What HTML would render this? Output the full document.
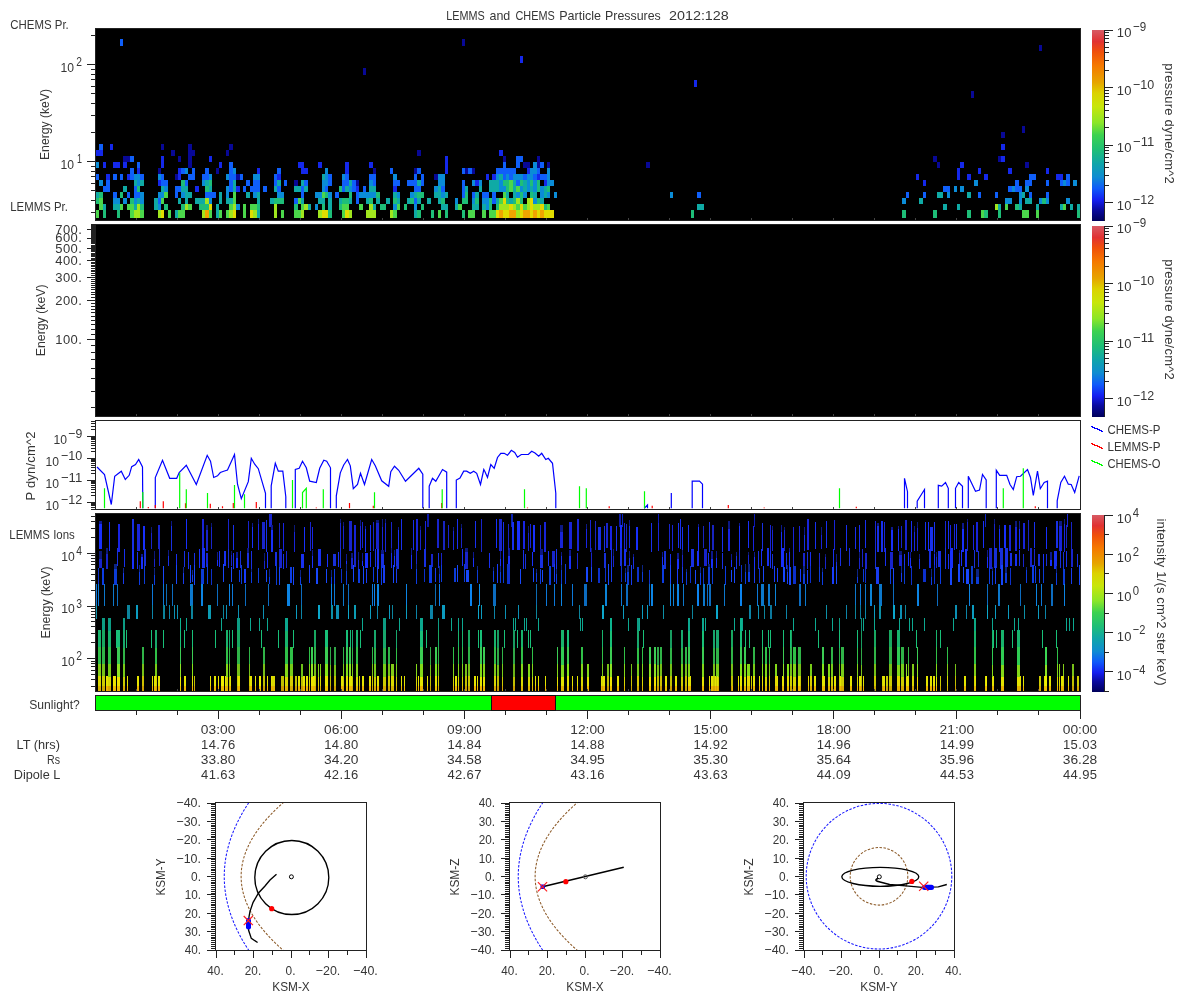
<!DOCTYPE html>
<html><head><meta charset="utf-8"><style>
html,body{margin:0;padding:0;background:#fff;width:1200px;height:1000px;overflow:hidden}
svg{display:block;will-change:transform}
text{font-family:"Liberation Sans",sans-serif}
</style></head><body>
<svg width="1200" height="1000" viewBox="0 0 1200 1000" shape-rendering="crispEdges">
<defs><linearGradient id="cm" x1="0" y1="0" x2="0" y2="1"><stop offset="0.000" stop-color="#d75a64"/><stop offset="0.060" stop-color="#e13232"/><stop offset="0.115" stop-color="#f0500a"/><stop offset="0.185" stop-color="#f57800"/><stop offset="0.275" stop-color="#e6a500"/><stop offset="0.330" stop-color="#dcd200"/><stop offset="0.400" stop-color="#c8e60a"/><stop offset="0.485" stop-color="#8ce628"/><stop offset="0.550" stop-color="#3cd250"/><stop offset="0.630" stop-color="#1ebe78"/><stop offset="0.700" stop-color="#0fa5aa"/><stop offset="0.770" stop-color="#0f8cd2"/><stop offset="0.830" stop-color="#0f5afa"/><stop offset="0.890" stop-color="#141ef0"/><stop offset="0.940" stop-color="#0a0aa0"/><stop offset="1.000" stop-color="#00005a"/></linearGradient></defs>
<rect width="1200" height="1000" fill="#fff"/>
<text x="446.30" y="19.50" font-size="13" text-anchor="start" textLength="38.50" lengthAdjust="spacingAndGlyphs" fill="#363636">LEMMS</text>
<text x="489.50" y="19.50" font-size="13" text-anchor="start" textLength="20.80" lengthAdjust="spacingAndGlyphs" fill="#363636">and</text>
<text x="515.50" y="19.50" font-size="13" text-anchor="start" textLength="39.30" lengthAdjust="spacingAndGlyphs" fill="#363636">CHEMS</text>
<text x="559.20" y="19.50" font-size="13" text-anchor="start" textLength="41.80" lengthAdjust="spacingAndGlyphs" fill="#363636">Particle</text>
<text x="605.00" y="19.50" font-size="13" text-anchor="start" textLength="55.80" lengthAdjust="spacingAndGlyphs" fill="#363636">Pressures</text>
<text x="669.00" y="19.50" font-size="13" text-anchor="start" textLength="59.80" lengthAdjust="spacingAndGlyphs" fill="#363636">2012:128</text>
<text x="10.30" y="29.00" font-size="13" text-anchor="start" textLength="58.50" lengthAdjust="spacingAndGlyphs" fill="#363636">CHEMS Pr.</text>
<text x="10.30" y="211.00" font-size="13" text-anchor="start" textLength="57.50" lengthAdjust="spacingAndGlyphs" fill="#363636">LEMMS Pr.</text>
<text x="9.30" y="538.50" font-size="13" text-anchor="start" textLength="65.50" lengthAdjust="spacingAndGlyphs" fill="#363636">LEMMS Ions</text>
<text x="29.30" y="708.50" font-size="13" text-anchor="start" textLength="50.50" lengthAdjust="spacingAndGlyphs" fill="#363636">Sunlight?</text>
<rect x="95.00" y="28.00" width="986.00" height="193.00" fill="#000"/>
<rect x="95.00" y="224.00" width="986.00" height="193.00" fill="#000"/>
<rect x="95.00" y="420.00" width="986.00" height="90.00" fill="#fff"/>
<rect x="95.00" y="513.00" width="986.00" height="179.00" fill="#000"/>
<text x="76.30" y="66.20" font-size="13" text-anchor="start" textLength="5.70" lengthAdjust="spacingAndGlyphs" fill="#363636">2</text>
<text x="60.60" y="71.90" font-size="13" text-anchor="start" textLength="13.50" lengthAdjust="spacingAndGlyphs" fill="#363636">10</text>
<text x="77.00" y="163.20" font-size="13" text-anchor="start" textLength="5.00" lengthAdjust="spacingAndGlyphs" fill="#363636">1</text>
<text x="60.50" y="168.90" font-size="13" text-anchor="start" textLength="13.50" lengthAdjust="spacingAndGlyphs" fill="#363636">10</text>
<text x="49.00" y="160.00" font-size="13" text-anchor="start" textLength="71.00" lengthAdjust="spacingAndGlyphs" transform="rotate(-90 49.00 160.00)" fill="#363636">Energy (keV)</text>
<text x="81.80" y="233.70" font-size="13" text-anchor="end" textLength="26.50" lengthAdjust="spacing" fill="#363636">700.</text>
<text x="81.80" y="242.43" font-size="13" text-anchor="end" textLength="26.50" lengthAdjust="spacing" fill="#363636">600.</text>
<text x="81.80" y="252.75" font-size="13" text-anchor="end" textLength="26.50" lengthAdjust="spacing" fill="#363636">500.</text>
<text x="81.80" y="265.39" font-size="13" text-anchor="end" textLength="26.50" lengthAdjust="spacing" fill="#363636">400.</text>
<text x="81.80" y="281.68" font-size="13" text-anchor="end" textLength="26.50" lengthAdjust="spacing" fill="#363636">300.</text>
<text x="81.80" y="304.65" font-size="13" text-anchor="end" textLength="26.50" lengthAdjust="spacing" fill="#363636">200.</text>
<text x="81.80" y="343.90" font-size="13" text-anchor="end" textLength="26.50" lengthAdjust="spacing" fill="#363636">100.</text>
<text x="44.80" y="356.30" font-size="13" text-anchor="start" textLength="72.00" lengthAdjust="spacingAndGlyphs" transform="rotate(-90 44.80 356.30)" fill="#363636">Energy (keV)</text>
<text x="53.50" y="443.80" font-size="13" text-anchor="start" textLength="13.50" lengthAdjust="spacingAndGlyphs" fill="#363636">10</text>
<text x="68.30" y="438.20" font-size="13" text-anchor="start" textLength="14.00" lengthAdjust="spacingAndGlyphs" fill="#363636">−9</text>
<text x="45.50" y="465.80" font-size="13" text-anchor="start" textLength="13.50" lengthAdjust="spacingAndGlyphs" fill="#363636">10</text>
<text x="60.90" y="460.20" font-size="13" text-anchor="start" textLength="21.30" lengthAdjust="spacingAndGlyphs" fill="#363636">−10</text>
<text x="45.50" y="487.80" font-size="13" text-anchor="start" textLength="13.50" lengthAdjust="spacingAndGlyphs" fill="#363636">10</text>
<text x="60.90" y="482.20" font-size="13" text-anchor="start" textLength="21.30" lengthAdjust="spacingAndGlyphs" fill="#363636">−11</text>
<text x="45.50" y="509.80" font-size="13" text-anchor="start" textLength="13.50" lengthAdjust="spacingAndGlyphs" fill="#363636">10</text>
<text x="60.90" y="504.20" font-size="13" text-anchor="start" textLength="21.30" lengthAdjust="spacingAndGlyphs" fill="#363636">−12</text>
<text x="34.50" y="500.50" font-size="13" text-anchor="start" textLength="69.00" lengthAdjust="spacing" transform="rotate(-90 34.50 500.50)" fill="#363636">P dyn/cm^2</text>
<text x="76.30" y="554.90" font-size="13" text-anchor="start" textLength="5.70" lengthAdjust="spacingAndGlyphs" fill="#363636">4</text>
<text x="61.30" y="560.60" font-size="13" text-anchor="start" textLength="13.50" lengthAdjust="spacingAndGlyphs" fill="#363636">10</text>
<text x="76.30" y="607.60" font-size="13" text-anchor="start" textLength="5.70" lengthAdjust="spacingAndGlyphs" fill="#363636">3</text>
<text x="61.30" y="613.30" font-size="13" text-anchor="start" textLength="13.50" lengthAdjust="spacingAndGlyphs" fill="#363636">10</text>
<text x="76.30" y="660.30" font-size="13" text-anchor="start" textLength="5.70" lengthAdjust="spacingAndGlyphs" fill="#363636">2</text>
<text x="61.30" y="666.00" font-size="13" text-anchor="start" textLength="13.50" lengthAdjust="spacingAndGlyphs" fill="#363636">10</text>
<text x="49.50" y="638.50" font-size="13" text-anchor="start" textLength="72.00" lengthAdjust="spacingAndGlyphs" transform="rotate(-90 49.50 638.50)" fill="#363636">Energy (keV)</text>
<rect x="1092.00" y="30.00" width="12.00" height="191.00" fill="url(#cm)"/>
<path d="M1104.5 30V221" stroke="#222"/>
<rect x="1092.00" y="226.00" width="12.00" height="191.00" fill="url(#cm)"/>
<path d="M1104.5 226V417" stroke="#222"/>
<rect x="1092.00" y="515.00" width="12.00" height="177.00" fill="url(#cm)"/>
<path d="M1104.5 515V692" stroke="#222"/>
<text x="1116.80" y="37.30" font-size="13" text-anchor="start" textLength="14.60" lengthAdjust="spacing" fill="#363636">10</text>
<text x="1133.00" y="31.40" font-size="13" text-anchor="start" textLength="13.20" lengthAdjust="spacingAndGlyphs" fill="#363636">−9</text>
<text x="1116.80" y="94.80" font-size="13" text-anchor="start" textLength="14.60" lengthAdjust="spacing" fill="#363636">10</text>
<text x="1133.00" y="88.90" font-size="13" text-anchor="start" textLength="21.20" lengthAdjust="spacingAndGlyphs" fill="#363636">−10</text>
<text x="1116.80" y="152.30" font-size="13" text-anchor="start" textLength="14.60" lengthAdjust="spacing" fill="#363636">10</text>
<text x="1133.00" y="146.40" font-size="13" text-anchor="start" textLength="21.20" lengthAdjust="spacingAndGlyphs" fill="#363636">−11</text>
<text x="1116.80" y="209.80" font-size="13" text-anchor="start" textLength="14.60" lengthAdjust="spacing" fill="#363636">10</text>
<text x="1133.00" y="203.90" font-size="13" text-anchor="start" textLength="21.20" lengthAdjust="spacingAndGlyphs" fill="#363636">−12</text>
<text x="1116.80" y="233.30" font-size="13" text-anchor="start" textLength="14.60" lengthAdjust="spacing" fill="#363636">10</text>
<text x="1133.00" y="227.40" font-size="13" text-anchor="start" textLength="13.20" lengthAdjust="spacingAndGlyphs" fill="#363636">−9</text>
<text x="1116.80" y="290.80" font-size="13" text-anchor="start" textLength="14.60" lengthAdjust="spacing" fill="#363636">10</text>
<text x="1133.00" y="284.90" font-size="13" text-anchor="start" textLength="21.20" lengthAdjust="spacingAndGlyphs" fill="#363636">−10</text>
<text x="1116.80" y="348.30" font-size="13" text-anchor="start" textLength="14.60" lengthAdjust="spacing" fill="#363636">10</text>
<text x="1133.00" y="342.40" font-size="13" text-anchor="start" textLength="21.20" lengthAdjust="spacingAndGlyphs" fill="#363636">−11</text>
<text x="1116.80" y="405.80" font-size="13" text-anchor="start" textLength="14.60" lengthAdjust="spacing" fill="#363636">10</text>
<text x="1133.00" y="399.90" font-size="13" text-anchor="start" textLength="21.20" lengthAdjust="spacingAndGlyphs" fill="#363636">−12</text>
<text x="1164.80" y="63.30" font-size="13" text-anchor="start" textLength="120.50" lengthAdjust="spacing" transform="rotate(90 1164.80 63.30)" fill="#363636">pressure dyne/cm^2</text>
<text x="1164.80" y="259.30" font-size="13" text-anchor="start" textLength="120.50" lengthAdjust="spacing" transform="rotate(90 1164.80 259.30)" fill="#363636">pressure dyne/cm^2</text>
<text x="1116.80" y="523.00" font-size="13" text-anchor="start" textLength="14.60" lengthAdjust="spacing" fill="#363636">10</text>
<text x="1132.80" y="516.70" font-size="13" text-anchor="start" textLength="6.30" lengthAdjust="spacingAndGlyphs" fill="#363636">4</text>
<text x="1116.80" y="562.20" font-size="13" text-anchor="start" textLength="14.60" lengthAdjust="spacing" fill="#363636">10</text>
<text x="1132.80" y="555.90" font-size="13" text-anchor="start" textLength="6.30" lengthAdjust="spacingAndGlyphs" fill="#363636">2</text>
<text x="1116.80" y="601.40" font-size="13" text-anchor="start" textLength="14.60" lengthAdjust="spacing" fill="#363636">10</text>
<text x="1132.80" y="595.10" font-size="13" text-anchor="start" textLength="6.30" lengthAdjust="spacingAndGlyphs" fill="#363636">0</text>
<text x="1116.80" y="640.60" font-size="13" text-anchor="start" textLength="14.60" lengthAdjust="spacing" fill="#363636">10</text>
<text x="1132.80" y="634.30" font-size="13" text-anchor="start" textLength="12.60" lengthAdjust="spacingAndGlyphs" fill="#363636">−2</text>
<text x="1116.80" y="679.80" font-size="13" text-anchor="start" textLength="14.60" lengthAdjust="spacing" fill="#363636">10</text>
<text x="1132.80" y="673.50" font-size="13" text-anchor="start" textLength="12.60" lengthAdjust="spacingAndGlyphs" fill="#363636">−4</text>
<text x="1157.00" y="518.50" font-size="13" text-anchor="start" textLength="167.00" lengthAdjust="spacing" transform="rotate(90 1157.00 518.50)" fill="#363636">intensity 1/(s cm^2 ster keV)</text>
<path d="M1091 426.5L1103 431.5" stroke="#0000ff" stroke-width="1.3"/>
<text x="1107.50" y="434.00" font-size="13" text-anchor="start" textLength="53.00" lengthAdjust="spacingAndGlyphs" fill="#363636">CHEMS-P</text>
<path d="M1091 443.5L1103 448.5" stroke="#ff0000" stroke-width="1.3"/>
<text x="1107.50" y="451.00" font-size="13" text-anchor="start" textLength="53.00" lengthAdjust="spacingAndGlyphs" fill="#363636">LEMMS-P</text>
<path d="M1091 460.5L1103 465.5" stroke="#00ff00" stroke-width="1.3"/>
<text x="1107.50" y="468.00" font-size="13" text-anchor="start" textLength="53.00" lengthAdjust="spacingAndGlyphs" fill="#363636">CHEMS-O</text>
<rect x="95.50" y="695.50" width="985.00" height="15.00" fill="#00ff00" stroke="#222" stroke-width="1"/>
<rect x="491.50" y="695.50" width="64.00" height="15.00" fill="#ff0000" stroke="#111" stroke-width="1"/>
<text x="218.12" y="734.00" font-size="13" text-anchor="middle" textLength="34.50" lengthAdjust="spacingAndGlyphs" fill="#363636">03:00</text>
<text x="341.25" y="734.00" font-size="13" text-anchor="middle" textLength="34.50" lengthAdjust="spacingAndGlyphs" fill="#363636">06:00</text>
<text x="464.38" y="734.00" font-size="13" text-anchor="middle" textLength="34.50" lengthAdjust="spacingAndGlyphs" fill="#363636">09:00</text>
<text x="587.50" y="734.00" font-size="13" text-anchor="middle" textLength="34.50" lengthAdjust="spacingAndGlyphs" fill="#363636">12:00</text>
<text x="710.62" y="734.00" font-size="13" text-anchor="middle" textLength="34.50" lengthAdjust="spacingAndGlyphs" fill="#363636">15:00</text>
<text x="833.75" y="734.00" font-size="13" text-anchor="middle" textLength="34.50" lengthAdjust="spacingAndGlyphs" fill="#363636">18:00</text>
<text x="956.88" y="734.00" font-size="13" text-anchor="middle" textLength="34.50" lengthAdjust="spacingAndGlyphs" fill="#363636">21:00</text>
<text x="1080.00" y="734.00" font-size="13" text-anchor="middle" textLength="34.50" lengthAdjust="spacingAndGlyphs" fill="#363636">00:00</text>
<text x="218.12" y="749.00" font-size="13" text-anchor="middle" textLength="34.00" lengthAdjust="spacing" fill="#363636">14.76</text>
<text x="218.12" y="764.00" font-size="13" text-anchor="middle" textLength="34.50" lengthAdjust="spacingAndGlyphs" fill="#363636">33.80</text>
<text x="218.12" y="779.00" font-size="13" text-anchor="middle" textLength="34.00" lengthAdjust="spacing" fill="#363636">41.63</text>
<text x="341.25" y="749.00" font-size="13" text-anchor="middle" textLength="34.00" lengthAdjust="spacing" fill="#363636">14.80</text>
<text x="341.25" y="764.00" font-size="13" text-anchor="middle" textLength="34.50" lengthAdjust="spacingAndGlyphs" fill="#363636">34.20</text>
<text x="341.25" y="779.00" font-size="13" text-anchor="middle" textLength="34.00" lengthAdjust="spacing" fill="#363636">42.16</text>
<text x="464.38" y="749.00" font-size="13" text-anchor="middle" textLength="34.00" lengthAdjust="spacing" fill="#363636">14.84</text>
<text x="464.38" y="764.00" font-size="13" text-anchor="middle" textLength="34.50" lengthAdjust="spacingAndGlyphs" fill="#363636">34.58</text>
<text x="464.38" y="779.00" font-size="13" text-anchor="middle" textLength="34.00" lengthAdjust="spacing" fill="#363636">42.67</text>
<text x="587.50" y="749.00" font-size="13" text-anchor="middle" textLength="34.00" lengthAdjust="spacing" fill="#363636">14.88</text>
<text x="587.50" y="764.00" font-size="13" text-anchor="middle" textLength="34.50" lengthAdjust="spacingAndGlyphs" fill="#363636">34.95</text>
<text x="587.50" y="779.00" font-size="13" text-anchor="middle" textLength="34.00" lengthAdjust="spacing" fill="#363636">43.16</text>
<text x="710.62" y="749.00" font-size="13" text-anchor="middle" textLength="34.00" lengthAdjust="spacing" fill="#363636">14.92</text>
<text x="710.62" y="764.00" font-size="13" text-anchor="middle" textLength="34.50" lengthAdjust="spacingAndGlyphs" fill="#363636">35.30</text>
<text x="710.62" y="779.00" font-size="13" text-anchor="middle" textLength="34.00" lengthAdjust="spacing" fill="#363636">43.63</text>
<text x="833.75" y="749.00" font-size="13" text-anchor="middle" textLength="34.00" lengthAdjust="spacing" fill="#363636">14.96</text>
<text x="833.75" y="764.00" font-size="13" text-anchor="middle" textLength="34.50" lengthAdjust="spacingAndGlyphs" fill="#363636">35.64</text>
<text x="833.75" y="779.00" font-size="13" text-anchor="middle" textLength="34.00" lengthAdjust="spacing" fill="#363636">44.09</text>
<text x="956.88" y="749.00" font-size="13" text-anchor="middle" textLength="34.00" lengthAdjust="spacing" fill="#363636">14.99</text>
<text x="956.88" y="764.00" font-size="13" text-anchor="middle" textLength="34.50" lengthAdjust="spacingAndGlyphs" fill="#363636">35.96</text>
<text x="956.88" y="779.00" font-size="13" text-anchor="middle" textLength="34.00" lengthAdjust="spacing" fill="#363636">44.53</text>
<text x="1080.00" y="749.00" font-size="13" text-anchor="middle" textLength="34.00" lengthAdjust="spacing" fill="#363636">15.03</text>
<text x="1080.00" y="764.00" font-size="13" text-anchor="middle" textLength="34.50" lengthAdjust="spacingAndGlyphs" fill="#363636">36.28</text>
<text x="1080.00" y="779.00" font-size="13" text-anchor="middle" textLength="34.00" lengthAdjust="spacing" fill="#363636">44.95</text>
<text x="60.00" y="749.00" font-size="13" text-anchor="end" textLength="43.50" lengthAdjust="spacingAndGlyphs" fill="#363636">LT (hrs)</text>
<text x="60.00" y="764.00" font-size="13" text-anchor="end" textLength="13.00" lengthAdjust="spacingAndGlyphs" fill="#363636">Rs</text>
<text x="60.30" y="779.00" font-size="13" text-anchor="end" textLength="46.50" lengthAdjust="spacingAndGlyphs" fill="#363636">Dipole L</text>
<path d="M96.00 210.00H99.00V218.00H96.00ZM99.00 204.00H103.00V210.00H99.00ZM99.00 198.00H103.00V204.00H99.00ZM120.00 204.00H123.00V210.00H120.00ZM127.00 204.00H130.00V210.00H127.00ZM130.00 210.00H134.00V218.00H130.00ZM130.00 204.00H134.00V210.00H130.00ZM140.00 210.00H144.00V218.00H140.00ZM161.00 198.00H164.00V204.00H161.00ZM164.00 192.00H168.00V198.00H164.00ZM168.00 210.00H171.00V218.00H168.00ZM178.00 210.00H181.00V218.00H178.00ZM181.00 210.00H185.00V218.00H181.00ZM188.00 204.00H192.00V210.00H188.00ZM209.00 210.00H212.00V218.00H209.00ZM219.00 210.00H222.00V218.00H219.00ZM226.00 210.00H229.00V218.00H226.00ZM229.00 204.00H233.00V210.00H229.00ZM233.00 198.00H236.00V204.00H233.00ZM233.00 192.00H236.00V198.00H233.00ZM243.00 210.00H246.00V218.00H243.00ZM243.00 204.00H246.00V210.00H243.00ZM250.00 204.00H253.00V210.00H250.00ZM253.00 204.00H257.00V210.00H253.00ZM281.00 210.00H284.00V218.00H281.00ZM294.00 210.00H298.00V218.00H294.00ZM298.00 210.00H301.00V218.00H298.00ZM298.00 198.00H301.00V204.00H298.00ZM301.00 204.00H304.00V210.00H301.00ZM322.00 192.00H325.00V198.00H322.00ZM342.00 210.00H345.00V218.00H342.00ZM342.00 204.00H345.00V210.00H342.00ZM345.00 204.00H349.00V210.00H345.00ZM359.00 204.00H363.00V210.00H359.00ZM393.00 210.00H397.00V218.00H393.00ZM397.00 204.00H400.00V210.00H397.00ZM438.00 210.00H441.00V218.00H438.00ZM458.00 204.00H462.00V210.00H458.00ZM468.00 210.00H472.00V218.00H468.00ZM472.00 210.00H475.00V218.00H472.00ZM482.00 210.00H486.00V218.00H482.00ZM489.00 210.00H492.00V218.00H489.00ZM492.00 210.00H496.00V218.00H492.00ZM499.00 198.00H503.00V204.00H499.00ZM503.00 192.00H506.00V198.00H503.00ZM509.00 186.00H513.00V192.00H509.00ZM509.00 180.00H513.00V186.00H509.00ZM516.00 204.00H520.00V210.00H516.00ZM516.00 186.00H520.00V192.00H516.00ZM523.00 204.00H527.00V210.00H523.00ZM547.00 204.00H550.00V210.00H547.00ZM981.00 210.00H984.00V218.00H981.00ZM1005.00 204.00H1008.00V210.00H1005.00ZM1022.00 210.00H1025.00V218.00H1022.00ZM1025.00 210.00H1029.00V218.00H1025.00ZM1036.00 210.00H1039.00V218.00H1036.00ZM1063.00 204.00H1066.00V210.00H1063.00Z" fill="#4bd74b"/>
<path d="M96.00 198.00H99.00V204.00H96.00ZM99.00 192.00H103.00V198.00H99.00ZM103.00 210.00H106.00V218.00H103.00ZM117.00 210.00H120.00V218.00H117.00ZM120.00 192.00H123.00V198.00H120.00ZM130.00 198.00H134.00V204.00H130.00ZM137.00 186.00H140.00V192.00H137.00ZM140.00 204.00H144.00V210.00H140.00ZM164.00 204.00H168.00V210.00H164.00ZM181.00 204.00H185.00V210.00H181.00ZM181.00 180.00H185.00V186.00H181.00ZM199.00 204.00H202.00V210.00H199.00ZM202.00 204.00H205.00V210.00H202.00ZM205.00 204.00H209.00V210.00H205.00ZM205.00 186.00H209.00V192.00H205.00ZM209.00 180.00H212.00V186.00H209.00ZM257.00 204.00H260.00V210.00H257.00ZM274.00 198.00H277.00V204.00H274.00ZM277.00 198.00H281.00V204.00H277.00ZM281.00 198.00H284.00V204.00H281.00ZM294.00 204.00H298.00V210.00H294.00ZM322.00 204.00H325.00V210.00H322.00ZM325.00 192.00H328.00V198.00H325.00ZM328.00 210.00H332.00V218.00H328.00ZM339.00 204.00H342.00V210.00H339.00ZM339.00 186.00H342.00V192.00H339.00ZM342.00 198.00H345.00V204.00H342.00ZM345.00 198.00H349.00V204.00H345.00ZM349.00 192.00H352.00V198.00H349.00ZM369.00 198.00H373.00V204.00H369.00ZM376.00 192.00H380.00V198.00H376.00ZM380.00 204.00H383.00V210.00H380.00ZM383.00 204.00H386.00V210.00H383.00ZM393.00 198.00H397.00V204.00H393.00ZM404.00 204.00H407.00V210.00H404.00ZM410.00 198.00H414.00V204.00H410.00ZM417.00 210.00H421.00V218.00H417.00ZM417.00 192.00H421.00V198.00H417.00ZM421.00 204.00H424.00V210.00H421.00ZM421.00 192.00H424.00V198.00H421.00ZM431.00 210.00H434.00V218.00H431.00ZM441.00 198.00H445.00V204.00H441.00ZM445.00 210.00H448.00V218.00H445.00ZM462.00 210.00H465.00V218.00H462.00ZM462.00 198.00H465.00V204.00H462.00ZM465.00 198.00H468.00V204.00H465.00ZM465.00 192.00H468.00V198.00H465.00ZM475.00 198.00H479.00V204.00H475.00ZM489.00 204.00H492.00V210.00H489.00ZM489.00 198.00H492.00V204.00H489.00ZM496.00 204.00H499.00V210.00H496.00ZM503.00 180.00H506.00V186.00H503.00ZM506.00 198.00H509.00V204.00H506.00ZM506.00 186.00H509.00V192.00H506.00ZM506.00 180.00H509.00V186.00H506.00ZM513.00 198.00H516.00V204.00H513.00ZM520.00 198.00H523.00V204.00H520.00ZM520.00 192.00H523.00V198.00H520.00ZM520.00 180.00H523.00V186.00H520.00ZM530.00 192.00H533.00V198.00H530.00ZM530.00 180.00H533.00V186.00H530.00ZM537.00 198.00H540.00V204.00H537.00ZM537.00 186.00H540.00V192.00H537.00ZM537.00 180.00H540.00V186.00H537.00ZM544.00 204.00H547.00V210.00H544.00ZM547.00 186.00H550.00V192.00H547.00ZM691.00 210.00H694.00V218.00H691.00ZM902.00 210.00H906.00V218.00H902.00ZM933.00 210.00H937.00V218.00H933.00ZM967.00 210.00H971.00V218.00H967.00ZM984.00 210.00H988.00V218.00H984.00ZM998.00 210.00H1001.00V218.00H998.00ZM1015.00 204.00H1019.00V210.00H1015.00ZM1042.00 198.00H1046.00V204.00H1042.00ZM1077.00 210.00H1080.00V218.00H1077.00Z" fill="#1ebe78"/>
<path d="M96.00 192.00H99.00V198.00H96.00ZM103.00 204.00H106.00V210.00H103.00ZM113.00 204.00H117.00V210.00H113.00ZM117.00 204.00H120.00V210.00H117.00ZM123.00 186.00H127.00V192.00H123.00ZM134.00 204.00H137.00V210.00H134.00ZM134.00 180.00H137.00V186.00H134.00ZM137.00 198.00H140.00V204.00H137.00ZM140.00 180.00H144.00V186.00H140.00ZM154.00 204.00H158.00V210.00H154.00ZM154.00 198.00H158.00V204.00H154.00ZM161.00 186.00H164.00V192.00H161.00ZM175.00 210.00H178.00V218.00H175.00ZM178.00 198.00H181.00V204.00H178.00ZM181.00 186.00H185.00V192.00H181.00ZM185.00 198.00H188.00V204.00H185.00ZM185.00 192.00H188.00V198.00H185.00ZM185.00 186.00H188.00V192.00H185.00ZM188.00 192.00H192.00V198.00H188.00ZM195.00 198.00H199.00V204.00H195.00ZM199.00 198.00H202.00V204.00H199.00ZM202.00 198.00H205.00V204.00H202.00ZM205.00 180.00H209.00V186.00H205.00ZM209.00 186.00H212.00V192.00H209.00ZM216.00 210.00H219.00V218.00H216.00ZM216.00 204.00H219.00V210.00H216.00ZM219.00 198.00H222.00V204.00H219.00ZM219.00 192.00H222.00V198.00H219.00ZM226.00 198.00H229.00V204.00H226.00ZM229.00 198.00H233.00V204.00H229.00ZM233.00 186.00H236.00V192.00H233.00ZM233.00 180.00H236.00V186.00H233.00ZM246.00 192.00H250.00V198.00H246.00ZM257.00 210.00H260.00V218.00H257.00ZM257.00 198.00H260.00V204.00H257.00ZM257.00 192.00H260.00V198.00H257.00ZM270.00 198.00H274.00V204.00H270.00ZM274.00 186.00H277.00V192.00H274.00ZM277.00 180.00H281.00V186.00H277.00ZM294.00 186.00H298.00V192.00H294.00ZM298.00 186.00H301.00V192.00H298.00ZM301.00 198.00H304.00V204.00H301.00ZM301.00 180.00H304.00V186.00H301.00ZM304.00 186.00H308.00V192.00H304.00ZM308.00 204.00H311.00V210.00H308.00ZM318.00 198.00H322.00V204.00H318.00ZM322.00 198.00H325.00V204.00H322.00ZM322.00 174.00H325.00V180.00H322.00ZM328.00 204.00H332.00V210.00H328.00ZM328.00 198.00H332.00V204.00H328.00ZM339.00 198.00H342.00V204.00H339.00ZM345.00 186.00H349.00V192.00H345.00ZM349.00 198.00H352.00V204.00H349.00ZM349.00 180.00H352.00V186.00H349.00ZM366.00 198.00H369.00V204.00H366.00ZM369.00 186.00H373.00V192.00H369.00ZM373.00 204.00H376.00V210.00H373.00ZM373.00 186.00H376.00V192.00H373.00ZM376.00 198.00H380.00V204.00H376.00ZM386.00 198.00H390.00V204.00H386.00ZM393.00 192.00H397.00V198.00H393.00ZM397.00 198.00H400.00V204.00H397.00ZM407.00 198.00H410.00V204.00H407.00ZM414.00 210.00H417.00V218.00H414.00ZM414.00 192.00H417.00V198.00H414.00ZM417.00 198.00H421.00V204.00H417.00ZM417.00 180.00H421.00V186.00H417.00ZM427.00 198.00H431.00V204.00H427.00ZM434.00 192.00H438.00V198.00H434.00ZM438.00 198.00H441.00V204.00H438.00ZM438.00 192.00H441.00V198.00H438.00ZM438.00 186.00H441.00V192.00H438.00ZM441.00 204.00H445.00V210.00H441.00ZM445.00 204.00H448.00V210.00H445.00ZM445.00 192.00H448.00V198.00H445.00ZM455.00 204.00H458.00V210.00H455.00ZM465.00 186.00H468.00V192.00H465.00ZM472.00 204.00H475.00V210.00H472.00ZM475.00 204.00H479.00V210.00H475.00ZM475.00 192.00H479.00V198.00H475.00ZM479.00 186.00H482.00V192.00H479.00ZM482.00 204.00H486.00V210.00H482.00ZM489.00 186.00H492.00V192.00H489.00ZM489.00 180.00H492.00V186.00H489.00ZM492.00 186.00H496.00V192.00H492.00ZM492.00 180.00H496.00V186.00H492.00ZM496.00 198.00H499.00V204.00H496.00ZM496.00 186.00H499.00V192.00H496.00ZM496.00 180.00H499.00V186.00H496.00ZM499.00 174.00H503.00V180.00H499.00ZM506.00 192.00H509.00V198.00H506.00ZM509.00 198.00H513.00V204.00H509.00ZM513.00 192.00H516.00V198.00H513.00ZM513.00 186.00H516.00V192.00H513.00ZM513.00 180.00H516.00V186.00H513.00ZM523.00 186.00H527.00V192.00H523.00ZM523.00 180.00H527.00V186.00H523.00ZM530.00 186.00H533.00V192.00H530.00ZM533.00 192.00H537.00V198.00H533.00ZM540.00 198.00H544.00V204.00H540.00ZM544.00 192.00H547.00V198.00H544.00ZM544.00 186.00H547.00V192.00H544.00ZM697.00 204.00H701.00V210.00H697.00ZM701.00 204.00H704.00V210.00H701.00ZM919.00 198.00H923.00V204.00H919.00ZM937.00 192.00H940.00V198.00H937.00ZM940.00 192.00H943.00V198.00H940.00ZM943.00 204.00H947.00V210.00H943.00ZM957.00 204.00H960.00V210.00H957.00ZM967.00 192.00H971.00V198.00H967.00ZM998.00 204.00H1001.00V210.00H998.00ZM1019.00 204.00H1022.00V210.00H1019.00ZM1022.00 192.00H1025.00V198.00H1022.00ZM1025.00 198.00H1029.00V204.00H1025.00ZM1029.00 198.00H1032.00V204.00H1029.00ZM1036.00 204.00H1039.00V210.00H1036.00ZM1060.00 204.00H1063.00V210.00H1060.00ZM1070.00 204.00H1073.00V210.00H1070.00ZM1077.00 204.00H1080.00V210.00H1077.00Z" fill="#0faaa5"/>
<path d="M96.00 174.00H99.00V180.00H96.00ZM99.00 144.00H103.00V150.00H99.00ZM103.00 186.00H106.00V192.00H103.00ZM106.00 186.00H110.00V192.00H106.00ZM106.00 180.00H110.00V186.00H106.00ZM113.00 192.00H117.00V198.00H113.00ZM113.00 174.00H117.00V180.00H113.00ZM120.00 174.00H123.00V180.00H120.00ZM127.00 192.00H130.00V198.00H127.00ZM130.00 174.00H134.00V180.00H130.00ZM130.00 168.00H134.00V174.00H130.00ZM130.00 156.00H134.00V162.00H130.00ZM134.00 192.00H137.00V198.00H134.00ZM134.00 186.00H137.00V192.00H134.00ZM137.00 192.00H140.00V198.00H137.00ZM137.00 162.00H140.00V168.00H137.00ZM140.00 174.00H144.00V180.00H140.00ZM158.00 198.00H161.00V204.00H158.00ZM161.00 180.00H164.00V186.00H161.00ZM161.00 174.00H164.00V180.00H161.00ZM164.00 180.00H168.00V186.00H164.00ZM175.00 192.00H178.00V198.00H175.00ZM175.00 186.00H178.00V192.00H175.00ZM178.00 186.00H181.00V192.00H178.00ZM181.00 168.00H185.00V174.00H181.00ZM185.00 180.00H188.00V186.00H185.00ZM188.00 174.00H192.00V180.00H188.00ZM192.00 174.00H195.00V180.00H192.00ZM192.00 168.00H195.00V174.00H192.00ZM202.00 174.00H205.00V180.00H202.00ZM205.00 192.00H209.00V198.00H205.00ZM205.00 174.00H209.00V180.00H205.00ZM205.00 168.00H209.00V174.00H205.00ZM209.00 192.00H212.00V198.00H209.00ZM212.00 192.00H216.00V198.00H212.00ZM229.00 186.00H233.00V192.00H229.00ZM229.00 180.00H233.00V186.00H229.00ZM229.00 174.00H233.00V180.00H229.00ZM229.00 168.00H233.00V174.00H229.00ZM229.00 162.00H233.00V168.00H229.00ZM233.00 174.00H236.00V180.00H233.00ZM240.00 174.00H243.00V180.00H240.00ZM243.00 186.00H246.00V192.00H243.00ZM246.00 180.00H250.00V186.00H246.00ZM250.00 186.00H253.00V192.00H250.00ZM253.00 186.00H257.00V192.00H253.00ZM253.00 180.00H257.00V186.00H253.00ZM257.00 186.00H260.00V192.00H257.00ZM257.00 180.00H260.00V186.00H257.00ZM263.00 186.00H267.00V192.00H263.00ZM274.00 180.00H277.00V186.00H274.00ZM274.00 174.00H277.00V180.00H274.00ZM277.00 186.00H281.00V192.00H277.00ZM277.00 168.00H281.00V174.00H277.00ZM284.00 180.00H287.00V186.00H284.00ZM294.00 198.00H298.00V204.00H294.00ZM301.00 192.00H304.00V198.00H301.00ZM301.00 186.00H304.00V192.00H301.00ZM304.00 180.00H308.00V186.00H304.00ZM325.00 186.00H328.00V192.00H325.00ZM328.00 180.00H332.00V186.00H328.00ZM328.00 174.00H332.00V180.00H328.00ZM335.00 192.00H339.00V198.00H335.00ZM342.00 186.00H345.00V192.00H342.00ZM342.00 180.00H345.00V186.00H342.00ZM345.00 180.00H349.00V186.00H345.00ZM345.00 174.00H349.00V180.00H345.00ZM352.00 186.00H356.00V192.00H352.00ZM352.00 180.00H356.00V186.00H352.00ZM356.00 198.00H359.00V204.00H356.00ZM356.00 192.00H359.00V198.00H356.00ZM363.00 186.00H366.00V192.00H363.00ZM369.00 174.00H373.00V180.00H369.00ZM373.00 180.00H376.00V186.00H373.00ZM373.00 174.00H376.00V180.00H373.00ZM390.00 168.00H393.00V174.00H390.00ZM393.00 180.00H397.00V186.00H393.00ZM397.00 180.00H400.00V186.00H397.00ZM407.00 180.00H410.00V186.00H407.00ZM410.00 180.00H414.00V186.00H410.00ZM414.00 198.00H417.00V204.00H414.00ZM414.00 186.00H417.00V192.00H414.00ZM414.00 180.00H417.00V186.00H414.00ZM414.00 174.00H417.00V180.00H414.00ZM417.00 186.00H421.00V192.00H417.00ZM417.00 168.00H421.00V174.00H417.00ZM421.00 180.00H424.00V186.00H421.00ZM421.00 174.00H424.00V180.00H421.00ZM441.00 186.00H445.00V192.00H441.00ZM462.00 192.00H465.00V198.00H462.00ZM462.00 186.00H465.00V192.00H462.00ZM462.00 180.00H465.00V186.00H462.00ZM462.00 168.00H465.00V174.00H462.00ZM468.00 168.00H472.00V174.00H468.00ZM472.00 192.00H475.00V198.00H472.00ZM482.00 192.00H486.00V198.00H482.00ZM486.00 192.00H489.00V198.00H486.00ZM492.00 198.00H496.00V204.00H492.00ZM492.00 192.00H496.00V198.00H492.00ZM496.00 168.00H499.00V174.00H496.00ZM499.00 168.00H503.00V174.00H499.00ZM503.00 174.00H506.00V180.00H503.00ZM503.00 168.00H506.00V174.00H503.00ZM503.00 162.00H506.00V168.00H503.00ZM506.00 168.00H509.00V174.00H506.00ZM509.00 174.00H513.00V180.00H509.00ZM509.00 168.00H513.00V174.00H509.00ZM513.00 168.00H516.00V174.00H513.00ZM516.00 180.00H520.00V186.00H516.00ZM516.00 162.00H520.00V168.00H516.00ZM516.00 156.00H520.00V162.00H516.00ZM520.00 156.00H523.00V162.00H520.00ZM523.00 174.00H527.00V180.00H523.00ZM533.00 174.00H537.00V180.00H533.00ZM537.00 168.00H540.00V174.00H537.00ZM540.00 174.00H544.00V180.00H540.00ZM540.00 162.00H544.00V168.00H540.00ZM544.00 174.00H547.00V180.00H544.00ZM697.00 192.00H701.00V198.00H697.00ZM906.00 192.00H909.00V198.00H906.00ZM923.00 192.00H926.00V198.00H923.00ZM943.00 186.00H947.00V192.00H943.00ZM947.00 186.00H950.00V192.00H947.00ZM978.00 192.00H981.00V198.00H978.00ZM995.00 192.00H998.00V198.00H995.00ZM1008.00 186.00H1012.00V192.00H1008.00ZM1015.00 186.00H1019.00V192.00H1015.00ZM1015.00 180.00H1019.00V186.00H1015.00ZM1019.00 186.00H1022.00V192.00H1019.00ZM1025.00 180.00H1029.00V186.00H1025.00ZM1029.00 192.00H1032.00V198.00H1029.00ZM1029.00 180.00H1032.00V186.00H1029.00ZM1029.00 174.00H1032.00V180.00H1029.00ZM1032.00 174.00H1036.00V180.00H1032.00ZM1046.00 192.00H1049.00V198.00H1046.00ZM1046.00 180.00H1049.00V186.00H1046.00ZM1060.00 180.00H1063.00V186.00H1060.00ZM1066.00 180.00H1070.00V186.00H1066.00ZM1066.00 174.00H1070.00V180.00H1066.00ZM120.00 39.00H123.00V46.00H120.00Z" fill="#0f5ffa"/>
<path d="M96.00 162.00H99.00V168.00H96.00ZM99.00 180.00H103.00V186.00H99.00ZM113.00 198.00H117.00V204.00H113.00ZM117.00 198.00H120.00V204.00H117.00ZM123.00 198.00H127.00V204.00H123.00ZM134.00 198.00H137.00V204.00H134.00ZM134.00 174.00H137.00V180.00H134.00ZM137.00 180.00H140.00V186.00H137.00ZM137.00 174.00H140.00V180.00H137.00ZM140.00 198.00H144.00V204.00H140.00ZM140.00 192.00H144.00V198.00H140.00ZM158.00 204.00H161.00V210.00H158.00ZM158.00 192.00H161.00V198.00H158.00ZM158.00 174.00H161.00V180.00H158.00ZM161.00 192.00H164.00V198.00H161.00ZM164.00 186.00H168.00V192.00H164.00ZM181.00 192.00H185.00V198.00H181.00ZM185.00 168.00H188.00V174.00H185.00ZM202.00 180.00H205.00V186.00H202.00ZM209.00 198.00H212.00V204.00H209.00ZM209.00 174.00H212.00V180.00H209.00ZM226.00 192.00H229.00V198.00H226.00ZM226.00 186.00H229.00V192.00H226.00ZM226.00 174.00H229.00V180.00H226.00ZM233.00 168.00H236.00V174.00H233.00ZM236.00 204.00H240.00V210.00H236.00ZM253.00 192.00H257.00V198.00H253.00ZM253.00 174.00H257.00V180.00H253.00ZM257.00 174.00H260.00V180.00H257.00ZM277.00 192.00H281.00V198.00H277.00ZM281.00 192.00H284.00V198.00H281.00ZM315.00 204.00H318.00V210.00H315.00ZM315.00 192.00H318.00V198.00H315.00ZM318.00 192.00H322.00V198.00H318.00ZM322.00 186.00H325.00V192.00H322.00ZM322.00 180.00H325.00V186.00H322.00ZM325.00 180.00H328.00V186.00H325.00ZM325.00 174.00H328.00V180.00H325.00ZM325.00 168.00H328.00V174.00H325.00ZM328.00 192.00H332.00V198.00H328.00ZM342.00 174.00H345.00V180.00H342.00ZM349.00 186.00H352.00V192.00H349.00ZM359.00 192.00H363.00V198.00H359.00ZM363.00 192.00H366.00V198.00H363.00ZM366.00 192.00H369.00V198.00H366.00ZM369.00 192.00H373.00V198.00H369.00ZM369.00 180.00H373.00V186.00H369.00ZM373.00 192.00H376.00V198.00H373.00ZM393.00 204.00H397.00V210.00H393.00ZM393.00 174.00H397.00V180.00H393.00ZM397.00 192.00H400.00V198.00H397.00ZM410.00 192.00H414.00V198.00H410.00ZM414.00 204.00H417.00V210.00H414.00ZM434.00 186.00H438.00V192.00H434.00ZM438.00 180.00H441.00V186.00H438.00ZM438.00 174.00H441.00V180.00H438.00ZM441.00 192.00H445.00V198.00H441.00ZM441.00 180.00H445.00V186.00H441.00ZM441.00 174.00H445.00V180.00H441.00ZM455.00 198.00H458.00V204.00H455.00ZM472.00 198.00H475.00V204.00H472.00ZM472.00 180.00H475.00V186.00H472.00ZM479.00 180.00H482.00V186.00H479.00ZM482.00 198.00H486.00V204.00H482.00ZM486.00 204.00H489.00V210.00H486.00ZM486.00 198.00H489.00V204.00H486.00ZM496.00 174.00H499.00V180.00H496.00ZM499.00 186.00H503.00V192.00H499.00ZM499.00 180.00H503.00V186.00H499.00ZM503.00 186.00H506.00V192.00H503.00ZM506.00 174.00H509.00V180.00H506.00ZM513.00 174.00H516.00V180.00H513.00ZM516.00 192.00H520.00V198.00H516.00ZM516.00 174.00H520.00V180.00H516.00ZM520.00 186.00H523.00V192.00H520.00ZM520.00 174.00H523.00V180.00H520.00ZM523.00 192.00H527.00V198.00H523.00ZM527.00 186.00H530.00V192.00H527.00ZM527.00 180.00H530.00V186.00H527.00ZM527.00 174.00H530.00V180.00H527.00ZM530.00 174.00H533.00V180.00H530.00ZM530.00 168.00H533.00V174.00H530.00ZM533.00 198.00H537.00V204.00H533.00ZM533.00 186.00H537.00V192.00H533.00ZM533.00 180.00H537.00V186.00H533.00ZM533.00 168.00H537.00V174.00H533.00ZM533.00 162.00H537.00V168.00H533.00ZM540.00 192.00H544.00V198.00H540.00ZM540.00 186.00H544.00V192.00H540.00ZM547.00 192.00H550.00V198.00H547.00ZM547.00 180.00H550.00V186.00H547.00ZM547.00 174.00H550.00V180.00H547.00ZM547.00 168.00H550.00V174.00H547.00ZM550.00 180.00H554.00V186.00H550.00ZM554.00 192.00H557.00V198.00H554.00ZM670.00 192.00H673.00V198.00H670.00ZM902.00 198.00H906.00V204.00H902.00ZM947.00 192.00H950.00V198.00H947.00ZM954.00 186.00H957.00V192.00H954.00ZM960.00 186.00H964.00V192.00H960.00ZM974.00 180.00H978.00V186.00H974.00ZM1005.00 198.00H1008.00V204.00H1005.00ZM1008.00 198.00H1012.00V204.00H1008.00ZM1012.00 186.00H1015.00V192.00H1012.00ZM1019.00 198.00H1022.00V204.00H1019.00ZM1019.00 192.00H1022.00V198.00H1019.00ZM1025.00 186.00H1029.00V192.00H1025.00ZM1039.00 198.00H1042.00V204.00H1039.00ZM1046.00 198.00H1049.00V204.00H1046.00ZM1063.00 180.00H1066.00V186.00H1063.00ZM1066.00 198.00H1070.00V204.00H1066.00ZM1073.00 180.00H1077.00V186.00H1073.00Z" fill="#0a8cd7"/>
<path d="M96.00 150.00H99.00V156.00H96.00ZM99.00 150.00H103.00V156.00H99.00ZM103.00 162.00H106.00V168.00H103.00ZM106.00 174.00H110.00V180.00H106.00ZM110.00 144.00H113.00V150.00H110.00ZM113.00 162.00H117.00V168.00H113.00ZM117.00 162.00H120.00V168.00H117.00ZM123.00 162.00H127.00V168.00H123.00ZM127.00 174.00H130.00V180.00H127.00ZM137.00 168.00H140.00V174.00H137.00ZM158.00 180.00H161.00V186.00H158.00ZM161.00 162.00H164.00V168.00H161.00ZM161.00 156.00H164.00V162.00H161.00ZM178.00 174.00H181.00V180.00H178.00ZM178.00 168.00H181.00V174.00H178.00ZM195.00 186.00H199.00V192.00H195.00ZM209.00 156.00H212.00V162.00H209.00ZM219.00 162.00H222.00V168.00H219.00ZM236.00 186.00H240.00V192.00H236.00ZM257.00 168.00H260.00V174.00H257.00ZM277.00 174.00H281.00V180.00H277.00ZM298.00 162.00H301.00V168.00H298.00ZM301.00 168.00H304.00V174.00H301.00ZM301.00 162.00H304.00V168.00H301.00ZM304.00 168.00H308.00V174.00H304.00ZM318.00 162.00H322.00V168.00H318.00ZM345.00 168.00H349.00V174.00H345.00ZM345.00 162.00H349.00V168.00H345.00ZM356.00 186.00H359.00V192.00H356.00ZM369.00 162.00H373.00V168.00H369.00ZM393.00 186.00H397.00V192.00H393.00ZM445.00 168.00H448.00V174.00H445.00ZM445.00 162.00H448.00V168.00H445.00ZM445.00 156.00H448.00V162.00H445.00ZM475.00 180.00H479.00V186.00H475.00ZM486.00 174.00H489.00V180.00H486.00ZM492.00 174.00H496.00V180.00H492.00ZM499.00 150.00H503.00V156.00H499.00ZM527.00 168.00H530.00V174.00H527.00ZM537.00 174.00H540.00V180.00H537.00ZM544.00 180.00H547.00V186.00H544.00ZM916.00 174.00H919.00V180.00H916.00ZM923.00 180.00H926.00V186.00H923.00ZM957.00 174.00H960.00V180.00H957.00ZM957.00 168.00H960.00V174.00H957.00ZM960.00 162.00H964.00V168.00H960.00ZM967.00 174.00H971.00V180.00H967.00ZM978.00 168.00H981.00V174.00H978.00ZM984.00 174.00H988.00V180.00H984.00ZM1001.00 156.00H1005.00V162.00H1001.00ZM1001.00 144.00H1005.00V150.00H1001.00ZM1008.00 168.00H1012.00V174.00H1008.00ZM1046.00 168.00H1049.00V174.00H1046.00ZM1056.00 174.00H1060.00V180.00H1056.00ZM1060.00 174.00H1063.00V180.00H1060.00ZM520.00 56.00H523.00V62.50H520.00ZM694.00 80.00H697.00V86.50H694.00Z" fill="#1428eb"/>
<path d="M123.00 156.00H127.00V162.00H123.00ZM127.00 156.00H130.00V162.00H127.00ZM158.00 168.00H161.00V174.00H158.00ZM161.00 144.00H164.00V150.00H161.00ZM171.00 150.00H175.00V156.00H171.00ZM175.00 174.00H178.00V180.00H175.00ZM178.00 156.00H181.00V162.00H178.00ZM188.00 162.00H192.00V168.00H188.00ZM188.00 156.00H192.00V162.00H188.00ZM188.00 150.00H192.00V156.00H188.00ZM188.00 144.00H192.00V150.00H188.00ZM192.00 150.00H195.00V156.00H192.00ZM216.00 168.00H219.00V174.00H216.00ZM226.00 150.00H229.00V156.00H226.00ZM229.00 144.00H233.00V150.00H229.00ZM236.00 174.00H240.00V180.00H236.00ZM294.00 180.00H298.00V186.00H294.00ZM356.00 180.00H359.00V186.00H356.00ZM373.00 168.00H376.00V174.00H373.00ZM414.00 168.00H417.00V174.00H414.00ZM417.00 150.00H421.00V156.00H417.00ZM434.00 174.00H438.00V180.00H434.00ZM465.00 168.00H468.00V174.00H465.00ZM472.00 168.00H475.00V174.00H472.00ZM503.00 156.00H506.00V162.00H503.00ZM523.00 162.00H527.00V168.00H523.00ZM527.00 162.00H530.00V168.00H527.00ZM537.00 162.00H540.00V168.00H537.00ZM537.00 156.00H540.00V162.00H537.00ZM547.00 162.00H550.00V168.00H547.00ZM646.00 162.00H650.00V168.00H646.00ZM933.00 156.00H937.00V162.00H933.00ZM937.00 162.00H940.00V168.00H937.00ZM998.00 156.00H1001.00V162.00H998.00ZM1001.00 132.00H1005.00V138.00H1001.00ZM1025.00 162.00H1029.00V168.00H1025.00ZM462.00 39.00H465.00V46.00H462.00ZM363.00 68.00H366.00V74.50H363.00ZM1039.00 44.50H1042.00V51.00H1039.00ZM971.00 91.00H974.00V97.50H971.00ZM1022.00 126.00H1025.00V132.50H1022.00Z" fill="#080896"/>
<path d="M134.00 210.00H137.00V218.00H134.00ZM137.00 210.00H140.00V218.00H137.00ZM137.00 204.00H140.00V210.00H137.00ZM158.00 210.00H161.00V218.00H158.00ZM185.00 204.00H188.00V210.00H185.00ZM202.00 210.00H205.00V218.00H202.00ZM205.00 198.00H209.00V204.00H205.00ZM229.00 210.00H233.00V218.00H229.00ZM233.00 204.00H236.00V210.00H233.00ZM253.00 210.00H257.00V218.00H253.00ZM274.00 210.00H277.00V218.00H274.00ZM274.00 204.00H277.00V210.00H274.00ZM301.00 210.00H304.00V218.00H301.00ZM304.00 204.00H308.00V210.00H304.00ZM318.00 210.00H322.00V218.00H318.00ZM349.00 210.00H352.00V218.00H349.00ZM366.00 210.00H369.00V218.00H366.00ZM369.00 210.00H373.00V218.00H369.00ZM369.00 204.00H373.00V210.00H369.00ZM373.00 210.00H376.00V218.00H373.00ZM390.00 210.00H393.00V218.00H390.00ZM499.00 204.00H503.00V210.00H499.00ZM503.00 204.00H506.00V210.00H503.00ZM506.00 204.00H509.00V210.00H506.00ZM513.00 204.00H516.00V210.00H513.00ZM516.00 210.00H520.00V218.00H516.00ZM516.00 198.00H520.00V204.00H516.00ZM527.00 204.00H530.00V210.00H527.00ZM527.00 198.00H530.00V204.00H527.00ZM533.00 204.00H537.00V210.00H533.00ZM537.00 204.00H540.00V210.00H537.00ZM995.00 204.00H998.00V210.00H995.00Z" fill="#a0e61e"/>
<path d="M161.00 210.00H164.00V218.00H161.00ZM209.00 204.00H212.00V210.00H209.00ZM233.00 210.00H236.00V218.00H233.00ZM250.00 210.00H253.00V218.00H250.00ZM322.00 210.00H325.00V218.00H322.00ZM325.00 210.00H328.00V218.00H325.00ZM345.00 210.00H349.00V218.00H345.00ZM496.00 210.00H499.00V218.00H496.00ZM503.00 210.00H506.00V218.00H503.00ZM503.00 198.00H506.00V204.00H503.00ZM506.00 210.00H509.00V218.00H506.00ZM509.00 204.00H513.00V210.00H509.00ZM520.00 210.00H523.00V218.00H520.00ZM520.00 204.00H523.00V210.00H520.00ZM530.00 210.00H533.00V218.00H530.00ZM530.00 204.00H533.00V210.00H530.00ZM530.00 198.00H533.00V204.00H530.00ZM537.00 210.00H540.00V218.00H537.00ZM540.00 204.00H544.00V210.00H540.00ZM544.00 210.00H547.00V218.00H544.00ZM547.00 210.00H550.00V218.00H547.00ZM550.00 210.00H554.00V218.00H550.00Z" fill="#e1dc00"/>
<path d="M205.00 210.00H209.00V218.00H205.00ZM499.00 210.00H503.00V218.00H499.00ZM509.00 210.00H513.00V218.00H509.00ZM513.00 210.00H516.00V218.00H513.00ZM523.00 210.00H527.00V218.00H523.00ZM527.00 210.00H530.00V218.00H527.00ZM533.00 210.00H537.00V218.00H533.00ZM540.00 210.00H544.00V218.00H540.00Z" fill="#f0a500"/>
<path d="M97.0 467.0L104.5 474.5L111.3 504.5L114.7 476.2L121.3 471.2L125.3 479.5L129.2 475.3L131.7 466.7L135.5 464.5L138.7 459.5L142.5 467.0L142.8 508.3M155.3 508.3L155.3 477.5L162.5 460.3L169.7 478.3L176.7 478.3L179.2 472.5L186.3 465.3L196.3 484.5L207.2 455.3L210.5 461.2L213.7 477.5L217.5 475.8L220.3 472.5L223.7 471.2L227.5 470.0L234.5 454.5L237.5 484.2L241.3 498.7L248.3 481.7L251.3 458.3L254.7 464.2L258.3 468.7L265.5 493.3L265.5 508.3M271.2 508.3L271.2 485.8L275.3 463.3L278.3 471.2L282.8 471.2L285.8 496.7L285.8 508.3M295.3 508.3L295.3 469.5L299.2 468.3L302.5 461.2L306.3 467.8L309.7 481.2L316.3 482.5L319.7 468.3L323.8 460.3L326.7 461.2L330.5 467.8L330.5 508.3M336.3 508.3L336.3 495.8L340.3 472.8L343.7 465.0L347.5 459.5L350.3 465.8L353.3 488.7L357.5 484.5L360.5 473.3L364.5 484.5L371.7 459.5L375.3 465.8L381.7 480.8L388.7 486.3L390.8 471.7L394.5 466.2L398.7 470.3L405.5 481.3L418.8 468.3L422.8 474.2L422.8 508.3M429.2 508.3L429.2 486.2L432.5 478.3L435.8 481.3L442.5 469.5L446.7 472.2L446.7 508.3M456.3 508.3L456.3 480.0L460.0 478.0L463.7 471.2L466.7 471.2L470.3 473.3L473.7 471.2L476.7 473.3L480.5 484.5L483.8 469.5L485.0 471.7L487.5 477.5L490.8 464.5L494.2 468.3L497.5 457.5L500.8 453.3L504.2 453.3L507.5 455.3L511.3 450.3L514.7 452.5L517.5 457.2L521.3 454.5L528.3 454.5L531.7 451.3L535.0 453.0L538.7 456.2L541.7 453.3L545.8 459.5L548.3 458.3L552.5 463.3L555.8 493.3L555.8 508.3M644.2 508.3L647.5 505.0L647.5 508.3M671.3 508.3L671.3 493.0L671.3 508.3M692.2 508.3L692.2 481.2L699.5 481.2L702.5 484.2L702.5 508.3M904.5 508.3L904.5 478.3L907.5 491.7L907.5 508.3M917.2 508.3L917.2 501.2L924.5 489.5L924.5 508.3M938.3 508.3L938.3 485.3L941.7 486.2L945.5 482.5L948.3 488.3L948.3 508.3M955.5 508.3L955.5 488.3L958.7 482.5L962.5 486.2L962.5 508.3M968.3 508.3L968.3 476.3L975.5 491.2L979.5 490.0L982.5 474.5L986.2 480.0L986.2 508.3M996.3 508.3L996.3 470.3L999.7 475.3L1006.7 475.3L1010.0 484.5L1013.3 489.5L1016.7 476.7L1020.5 476.3L1027.5 469.5L1030.5 477.5L1033.3 495.3L1037.5 471.2L1040.3 488.7L1044.2 482.5L1047.5 481.2L1047.5 508.3M1057.2 508.3L1057.2 500.8L1060.8 482.5L1064.5 476.3L1068.3 484.2L1071.2 484.5L1074.7 492.5L1079.2 475.8" fill="none" stroke="#0000ff" stroke-width="1.2" stroke-linejoin="miter" shape-rendering="auto"/>
<path d="M140.3 508.3L140.3 501.2L140.3 508.3M148.3 508.3L148.3 507.0L148.3 508.3M155.3 508.3L155.3 505.0L155.3 508.3M163.3 508.3L163.3 501.2L163.3 508.3M185.5 508.3L185.5 503.3L185.5 508.3M210.3 508.3L210.3 503.8L210.3 508.3M222.5 508.3L222.5 506.2L222.5 508.3M233.3 508.3L233.3 503.0L233.3 508.3M256.3 508.3L256.3 502.0L256.3 508.3M316.3 508.3L316.3 507.5L316.3 508.3M349.5 508.3L349.5 503.0L349.5 508.3M373.3 508.3L373.3 505.8L373.3 508.3M441.7 508.3L441.7 503.0L441.7 508.3M527.5 508.3L527.5 507.5L527.5 508.3M609.2 508.3L609.2 506.2L609.2 508.3M652.2 508.3L652.2 505.8L652.2 508.3M728.3 508.3L728.3 505.0L728.3 508.3M764.2 508.3L764.2 507.5L764.2 508.3M856.3 508.3L856.3 506.7L856.3 508.3M1035.3 508.3L1035.3 506.2L1035.3 508.3" fill="none" stroke="#ff0000" stroke-width="1.2" stroke-linejoin="miter" shape-rendering="auto"/>
<path d="M104.5 508.3L104.5 488.3L104.5 508.3M142.8 508.3L142.8 492.0L142.8 508.3M179.7 508.3L179.7 473.0L179.7 508.3M186.3 508.3L186.3 489.2L186.3 508.3M207.5 508.3L207.5 493.0L207.5 508.3M234.5 508.3L234.5 485.0L234.5 508.3M244.5 508.3L244.5 494.2L244.5 508.3M292.5 508.3L292.5 480.0L292.5 508.3M323.3 508.3L323.3 489.2L323.3 508.3M374.5 508.3L374.5 492.2L374.5 508.3M442.2 508.3L442.2 489.2L442.2 508.3M524.5 508.3L524.5 489.2L524.5 508.3M579.5 508.3L579.5 486.2L579.5 508.3M586.3 508.3L586.3 488.3L586.3 508.3M644.5 508.3L644.5 491.2L644.5 508.3M839.5 508.3L839.5 488.3L839.5 508.3M1003.3 508.3L1003.3 488.3L1003.3 508.3M1023.3 508.3L1023.3 468.3L1023.3 508.3M302.5 508.3L302.5 492.5L306.3 488.3L306.3 508.3" fill="none" stroke="#00ff00" stroke-width="1.2" stroke-linejoin="miter" shape-rendering="auto"/>
<path d="M269 514h3V527h-3ZM151 527h1V549h-1ZM158 525h2V549h-2ZM206 525h2V551h-2ZM211 523h1V549h-1ZM228 519h1V550h-1ZM248 521h1V551h-1ZM262 522h3V549h-3ZM310 522h1V551h-1ZM340 519h1V548h-1ZM343 522h1V549h-1ZM349 521h3V551h-3ZM362 522h1V548h-1ZM373 522h1V551h-1ZM376 520h3V549h-3ZM391 522h1V552h-1ZM420 526h1V550h-1ZM437 519h2V548h-2ZM448 525h1V548h-1ZM461 524h1V548h-1ZM481 519h1V552h-1ZM499 519h3V551h-3ZM528 526h1V551h-1ZM540 525h1V551h-1ZM606 523h2V548h-2ZM624 523h1V549h-1ZM669 524h1V549h-1ZM784 527h1V551h-1ZM901 526h1V548h-1ZM905 520h2V550h-2ZM917 522h1V551h-1ZM967 519h1V551h-1ZM994 519h1V551h-1ZM1071 522h1V550h-1ZM99 551h3V568h-3ZM106 548h2V569h-2ZM154 551h1V567h-1ZM159 549h1V566h-1ZM231 551h1V566h-1ZM264 553h1V569h-1ZM279 549h3V568h-3ZM286 551h1V568h-1ZM351 553h2V569h-2ZM354 548h2V567h-2ZM358 552h1V569h-1ZM416 551h1V568h-1ZM431 554h2V567h-2ZM441 553h1V566h-1ZM465 548h3V569h-3ZM552 551h3V567h-3ZM577 553h1V569h-1ZM591 548h1V567h-1ZM613 549h1V567h-1ZM682 548h1V568h-1ZM704 549h3V566h-3ZM739 550h1V566h-1ZM748 552h1V568h-1ZM793 549h1V569h-1ZM803 553h2V569h-2ZM819 553h1V567h-1ZM825 554h1V569h-1ZM859 552h1V569h-1ZM862 549h1V567h-1ZM865 553h2V569h-2ZM890 552h3V569h-3ZM899 551h3V566h-3ZM936 552h1V568h-1ZM959 550h1V569h-1ZM989 548h3V569h-3ZM1023 554h1V567h-1ZM1030 548h2V567h-2ZM1034 549h1V566h-1ZM1071 549h2V567h-2Z" fill="#1824cc"/>
<path d="M427 514h2V527h-2ZM619 514h2V527h-2Z" fill="#0c18a8"/>
<path d="M511 514h2V527h-2Z" fill="#0c24b4"/>
<path d="M622 514h1V527h-1ZM985 514h1V527h-1Z" fill="#0c24c0"/>
<path d="M658 514h1V527h-1ZM754 514h1V527h-1Z" fill="#0c18b4"/>
<path d="M1067 514h1V527h-1ZM137 524h3V551h-3ZM202 519h2V550h-2ZM294 525h1V552h-1ZM354 525h2V552h-2ZM382 519h1V550h-1ZM385 519h1V552h-1ZM416 519h2V551h-2ZM453 527h1V550h-1ZM530 524h1V548h-1ZM544 522h2V552h-2ZM560 525h3V548h-3ZM569 522h3V549h-3ZM577 519h2V551h-2ZM590 520h1V552h-1ZM658 523h1V551h-1ZM672 525h1V551h-1ZM770 525h1V552h-1ZM772 526h1V551h-1ZM793 527h1V549h-1ZM799 526h1V552h-1ZM807 519h2V550h-2ZM821 527h1V549h-1ZM834 520h1V550h-1ZM875 521h1V551h-1ZM884 522h1V552h-1ZM945 521h1V552h-1ZM954 524h1V550h-1ZM976 522h2V552h-2ZM1009 525h2V551h-2ZM1015 521h2V551h-2ZM1023 523h2V549h-2ZM1059 521h3V551h-3ZM206 553h2V567h-2Z" fill="#1824d8"/>
<path d="M99 521h3V549h-3ZM109 522h1V551h-1ZM143 526h2V550h-2ZM186 519h1V549h-1ZM252 523h1V548h-1ZM271 525h2V552h-2ZM304 527h1V552h-1ZM365 526h1V552h-1ZM398 527h1V550h-1ZM496 519h1V548h-1ZM517 521h3V550h-3ZM533 525h2V552h-2ZM620 525h2V551h-2ZM636 527h2V550h-2ZM698 524h1V551h-1ZM739 523h1V550h-1ZM748 521h1V548h-1ZM781 525h1V551h-1ZM891 527h2V551h-2ZM898 526h1V551h-1ZM928 522h1V551h-1ZM962 523h2V552h-2ZM983 521h1V548h-1ZM999 525h1V552h-1ZM1004 525h2V548h-2ZM1019 521h1V549h-1ZM1046 527h1V549h-1ZM132 550h2V569h-2ZM141 554h2V569h-2ZM199 549h1V568h-1ZM217 552h1V566h-1ZM236 552h2V568h-2ZM267 552h1V568h-1ZM312 550h1V568h-1ZM327 554h1V567h-1ZM338 552h1V567h-1ZM346 554h1V569h-1ZM362 553h1V566h-1ZM365 553h3V568h-3ZM394 550h1V567h-1ZM411 548h1V569h-1ZM473 552h1V567h-1ZM500 551h1V569h-1ZM508 548h2V568h-2ZM532 552h1V566h-1ZM569 550h2V569h-2ZM662 552h1V568h-1ZM677 553h2V569h-2ZM697 551h2V566h-2ZM708 553h1V567h-1ZM711 551h2V568h-2ZM716 551h1V568h-1ZM731 554h1V567h-1ZM754 552h1V569h-1ZM761 549h1V566h-1ZM781 548h3V567h-3ZM789 548h1V568h-1ZM908 552h1V566h-1ZM910 552h1V568h-1ZM934 551h1V567h-1ZM950 548h3V568h-3ZM961 550h1V566h-1ZM987 550h1V568h-1ZM1043 554h1V569h-1ZM1050 552h2V566h-2Z" fill="#1830fc"/>
<path d="M99 521h3V524h-3ZM252 523h1V527h-1ZM271 525h2V530h-2ZM365 526h1V529h-1ZM370 525h1V531h-1ZM398 527h1V530h-1ZM413 520h1V526h-1ZM457 519h1V525h-1ZM512 522h2V528h-2ZM651 523h1V530h-1ZM680 519h1V522h-1ZM688 525h1V531h-1ZM698 524h1V527h-1ZM722 527h1V531h-1ZM739 523h1V526h-1ZM781 525h1V532h-1ZM846 525h1V530h-1ZM859 525h1V532h-1ZM891 527h2V530h-2ZM898 526h1V529h-1ZM911 521h1V525h-1ZM925 522h1V528h-1ZM934 522h1V528h-1ZM948 521h1V526h-1ZM962 523h2V529h-2ZM999 525h1V529h-1ZM1019 521h1V529h-1ZM1034 522h1V526h-1ZM141 554h2V557h-2ZM176 554h1V557h-1ZM188 552h1V559h-1ZM217 552h1V560h-1ZM224 551h2V557h-2ZM236 552h2V558h-2ZM301 554h3V562h-3ZM312 550h1V556h-1ZM346 554h1V561h-1ZM362 553h1V561h-1ZM377 549h2V555h-2ZM394 550h1V556h-1ZM411 548h1V555h-1ZM473 552h1V558h-1ZM489 553h1V557h-1ZM500 551h1V559h-1ZM508 548h2V556h-2ZM523 550h1V553h-1ZM556 549h1V553h-1ZM569 550h2V556h-2ZM662 552h1V557h-1ZM670 554h1V562h-1ZM677 553h2V559h-2ZM711 551h2V559h-2ZM716 551h1V558h-1ZM731 554h1V560h-1ZM754 552h1V557h-1ZM786 553h1V558h-1ZM789 548h1V552h-1ZM885 548h1V552h-1ZM910 552h1V558h-1ZM934 551h1V554h-1ZM948 554h1V560h-1ZM987 550h1V557h-1ZM1015 554h2V562h-2ZM1050 552h2V560h-2Z" fill="#0c1890"/>
<path d="M118 524h2V552h-2ZM258 519h1V550h-1ZM283 523h1V551h-1ZM312 527h1V549h-1ZM360 520h1V550h-1ZM425 521h1V550h-1ZM523 521h2V549h-2ZM586 524h1V548h-1ZM610 526h2V550h-2ZM728 521h2V551h-2ZM753 526h1V551h-1ZM914 526h1V551h-1ZM950 525h1V551h-1ZM973 525h1V550h-1ZM1064 519h1V552h-1Z" fill="#1824e4"/>
<path d="M132 519h2V550h-2ZM171 521h1V551h-1ZM598 527h3V550h-3ZM604 526h1V552h-1ZM629 520h1V548h-1ZM709 522h1V552h-1ZM762 523h1V551h-1ZM804 527h1V551h-1ZM877 523h2V552h-2ZM1056 521h2V548h-2ZM117 548h1V566h-1ZM168 550h1V566h-1ZM184 551h1V567h-1ZM194 553h1V569h-1ZM247 548h2V568h-2ZM251 551h1V569h-1ZM275 552h2V566h-2ZM375 549h1V567h-1ZM381 550h3V568h-3ZM391 548h1V568h-1ZM424 549h2V567h-2ZM438 553h1V568h-1ZM540 549h3V568h-3ZM561 552h1V569h-1ZM611 548h1V567h-1ZM629 551h1V566h-1ZM633 554h1V569h-1ZM691 549h3V567h-3ZM722 553h1V569h-1ZM736 552h1V569h-1ZM758 551h1V569h-1ZM836 554h1V567h-1ZM840 548h1V566h-1ZM919 554h1V569h-1ZM929 549h2V568h-2ZM938 551h3V567h-3ZM945 548h1V569h-1ZM1005 548h3V567h-3ZM1010 553h2V566h-2ZM1077 554h1V567h-1Z" fill="#1830e4"/>
<path d="M151 527h1V533h-1ZM206 525h2V530h-2ZM211 523h1V527h-1ZM279 523h1V531h-1ZM294 525h1V532h-1ZM340 519h1V523h-1ZM343 522h1V526h-1ZM376 520h3V523h-3ZM420 526h1V530h-1ZM461 524h1V528h-1ZM508 524h1V532h-1ZM528 526h1V533h-1ZM626 524h1V532h-1ZM784 527h1V530h-1ZM917 522h1V528h-1ZM967 519h1V522h-1ZM994 519h1V524h-1ZM1015 521h2V527h-2ZM1066 525h1V531h-1ZM99 551h3V559h-3ZM106 548h2V554h-2ZM154 551h1V559h-1ZM231 551h1V555h-1ZM264 553h1V561h-1ZM351 553h2V558h-2ZM358 552h1V560h-1ZM396 549h3V552h-3ZM465 548h3V552h-3ZM591 548h1V553h-1ZM613 549h1V556h-1ZM682 548h1V555h-1ZM748 552h1V555h-1ZM772 554h1V559h-1ZM825 554h1V557h-1ZM859 552h1V558h-1ZM899 551h3V555h-3ZM936 552h1V557h-1ZM959 550h1V553h-1ZM974 550h1V553h-1ZM98 568h1V574h-1ZM211 569h1V573h-1ZM598 568h2V574h-2ZM793 566h3V574h-3ZM923 569h3V577h-3Z" fill="#0c1878"/>
<path d="M171 521h1V526h-1ZM258 519h1V524h-1ZM360 520h1V526h-1ZM382 519h1V527h-1ZM385 519h1V523h-1ZM453 527h1V531h-1ZM560 525h3V532h-3ZM586 524h1V529h-1ZM629 520h1V526h-1ZM728 521h2V529h-2ZM772 526h1V530h-1ZM804 527h1V535h-1ZM821 527h1V535h-1ZM877 523h2V526h-2ZM914 526h1V532h-1ZM1059 521h3V526h-3ZM1064 519h1V524h-1ZM168 550h1V556h-1ZM247 548h2V553h-2ZM333 554h3V559h-3ZM381 550h3V554h-3ZM391 548h1V553h-1ZM525 554h1V562h-1ZM540 549h3V555h-3ZM561 552h1V556h-1ZM620 548h2V552h-2ZM629 551h1V558h-1ZM633 554h1V557h-1ZM736 552h1V556h-1ZM836 554h1V562h-1ZM875 550h1V553h-1ZM919 554h1V559h-1ZM978 551h1V556h-1ZM1000 548h3V553h-3ZM1060 548h1V555h-1ZM1063 552h1V556h-1Z" fill="#0c1884"/>
<path d="M233 525h1V550h-1ZM266 520h1V552h-1ZM370 525h1V551h-1ZM401 519h1V550h-1ZM413 520h1V550h-1ZM457 519h1V549h-1ZM475 521h1V548h-1ZM503 522h1V551h-1ZM512 522h2V550h-2ZM616 526h1V551h-1ZM651 523h1V552h-1ZM678 523h1V548h-1ZM680 519h1V549h-1ZM682 527h1V550h-1ZM688 525h1V552h-1ZM722 527h1V552h-1ZM815 522h1V549h-1ZM826 521h1V548h-1ZM846 525h1V551h-1ZM855 527h1V549h-1ZM859 525h1V552h-1ZM865 520h1V548h-1ZM881 521h2V552h-2ZM911 521h1V552h-1ZM925 522h1V550h-1ZM930 527h3V551h-3ZM934 522h1V552h-1ZM948 521h1V549h-1ZM956 524h1V549h-1ZM1034 522h1V548h-1ZM124 549h1V567h-1ZM137 552h1V569h-1ZM176 554h1V569h-1ZM188 552h1V569h-1ZM202 548h3V568h-3ZM219 551h1V567h-1ZM224 551h2V566h-2ZM233 553h1V569h-1ZM283 554h1V569h-1ZM301 554h3V568h-3ZM318 549h3V566h-3ZM370 552h1V567h-1ZM377 549h2V569h-2ZM462 549h1V566h-1ZM489 553h1V568h-1ZM503 548h1V568h-1ZM523 550h1V569h-1ZM548 551h1V566h-1ZM556 549h1V569h-1ZM624 549h2V566h-2ZM670 554h1V569h-1ZM767 548h2V566h-2ZM770 551h1V568h-1ZM786 553h1V569h-1ZM810 552h1V566h-1ZM833 549h1V568h-1ZM885 548h1V566h-1ZM904 554h1V567h-1ZM948 554h1V569h-1ZM965 549h2V567h-2ZM1015 554h2V566h-2ZM1019 550h1V566h-1ZM1054 551h3V569h-3ZM1066 551h1V567h-1Z" fill="#1830f0"/>
<path d="M279 523h1V548h-1ZM443 521h2V550h-2ZM508 524h1V550h-1ZM595 521h1V550h-1ZM626 524h1V552h-1ZM703 526h1V548h-1ZM712 525h2V550h-2ZM1028 520h1V551h-1ZM1066 525h1V548h-1Z" fill="#1824c0"/>
<path d="M144 549h2V566h-2ZM228 549h1V568h-1ZM240 551h1V568h-1ZM333 554h3V566h-3ZM340 548h1V568h-1ZM396 549h3V569h-3ZM525 554h1V569h-1ZM604 553h2V568h-2ZM620 548h2V566h-2ZM664 551h2V569h-2ZM772 554h1V569h-1ZM807 552h1V569h-1ZM849 548h1V566h-1ZM875 550h1V569h-1ZM974 550h1V568h-1ZM978 551h1V567h-1ZM994 548h3V568h-3ZM1000 548h3V569h-3ZM1038 554h2V566h-2ZM1046 554h1V566h-1ZM1060 548h1V568h-1ZM1063 552h1V569h-1Z" fill="#1830d8"/>
<path d="M98 568h1V585h-1ZM211 569h1V585h-1ZM341 569h1V583h-1ZM424 569h1V582h-1ZM507 564h3V584h-3ZM598 568h2V583h-2ZM605 568h1V582h-1ZM621 565h1V582h-1ZM637 567h2V582h-2ZM649 570h1V584h-1ZM690 566h1V583h-1ZM703 568h1V585h-1ZM741 565h1V582h-1ZM759 568h1V583h-1ZM793 566h3V584h-3ZM810 566h1V583h-1ZM865 569h1V583h-1ZM911 566h1V585h-1ZM923 569h3V582h-3ZM934 565h1V584h-1ZM1010 568h1V585h-1Z" fill="#0c30cc"/>
<path d="M102 568h2V585h-2ZM139 565h1V585h-1ZM154 568h1V585h-1ZM207 564h1V584h-1ZM239 570h1V582h-1ZM251 569h1V583h-1ZM269 569h1V584h-1ZM290 567h2V583h-2ZM300 570h1V585h-1ZM331 570h1V584h-1ZM334 569h1V585h-1ZM358 569h2V583h-2ZM373 567h1V582h-1ZM381 566h1V585h-1ZM416 564h1V584h-1ZM429 565h3V583h-3ZM439 566h1V583h-1ZM441 565h1V582h-1ZM493 567h1V582h-1ZM536 569h1V582h-1ZM540 569h1V584h-1ZM556 569h1V584h-1ZM625 568h1V582h-1ZM662 565h2V583h-2ZM700 567h1V585h-1ZM725 566h1V585h-1ZM745 564h1V584h-1ZM748 564h2V582h-2ZM822 568h1V585h-1ZM857 569h1V583h-1ZM931 569h1V585h-1ZM940 564h1V584h-1ZM989 567h1V584h-1ZM1026 567h1V583h-1ZM1032 565h2V583h-2ZM1035 566h1V583h-1ZM1056 566h1V585h-1Z" fill="#0c3ce4"/>
<path d="M114 564h3V585h-3ZM144 566h1V584h-1ZM201 569h3V584h-3ZM241 565h1V584h-1ZM258 568h1V583h-1ZM276 564h1V585h-1ZM346 564h1V585h-1ZM454 568h2V582h-2ZM464 564h1V582h-1ZM477 566h1V583h-1ZM500 566h1V583h-1ZM503 568h1V583h-1ZM549 566h2V585h-2ZM561 565h1V584h-1ZM565 564h1V584h-1ZM627 565h2V585h-2ZM642 565h1V582h-1ZM686 569h1V585h-1ZM708 564h2V585h-2ZM712 566h1V584h-1ZM803 566h2V584h-2ZM819 567h1V582h-1ZM863 569h1V582h-1ZM890 568h1V584h-1ZM976 569h3V584h-3ZM992 567h1V585h-1ZM1005 567h2V583h-2ZM1043 567h1V583h-1ZM1063 569h2V585h-2Z" fill="#0c3cd8"/>
<path d="M114 564h3V569h-3ZM139 565h1V572h-1ZM154 568h1V575h-1ZM251 569h1V572h-1ZM269 569h1V577h-1ZM300 570h1V577h-1ZM331 570h1V577h-1ZM346 564h1V571h-1ZM416 564h1V569h-1ZM439 566h1V574h-1ZM477 566h1V570h-1ZM493 567h1V571h-1ZM500 566h1V572h-1ZM536 569h1V573h-1ZM556 569h1V574h-1ZM625 568h1V573h-1ZM627 565h2V572h-2ZM642 565h1V572h-1ZM686 569h1V572h-1ZM700 567h1V573h-1ZM745 564h1V572h-1ZM748 564h2V572h-2ZM803 566h2V574h-2ZM822 568h1V572h-1ZM857 569h1V577h-1ZM931 569h1V577h-1ZM976 569h3V577h-3ZM1005 567h2V573h-2ZM1026 567h1V570h-1ZM1056 566h1V573h-1Z" fill="#0c2484"/>
<path d="M123 568h1V584h-1ZM183 567h1V584h-1ZM192 570h1V582h-1ZM383 565h2V583h-2ZM396 566h1V583h-1ZM435 568h1V582h-1ZM554 564h1V582h-1ZM611 566h1V582h-1ZM631 565h1V585h-1ZM682 567h1V583h-1ZM754 567h1V583h-1ZM787 565h1V584h-1ZM807 570h1V584h-1ZM876 567h3V584h-3ZM901 566h1V582h-1ZM995 566h1V584h-1ZM1039 569h1V583h-1ZM1071 568h1V584h-1Z" fill="#183cf0"/>
<path d="M123 568h1V573h-1ZM176 565h1V573h-1ZM183 567h1V573h-1ZM190 565h1V573h-1ZM192 570h1V575h-1ZM293 567h1V575h-1ZM316 568h2V576h-2ZM353 565h1V570h-1ZM366 569h1V572h-1ZM393 565h1V570h-1ZM396 566h1V569h-1ZM586 567h2V574h-2ZM695 570h1V574h-1ZM731 570h1V575h-1ZM763 566h1V570h-1ZM783 567h2V575h-2ZM787 565h1V572h-1ZM800 569h1V574h-1ZM832 567h2V572h-2ZM893 568h1V575h-1ZM901 566h1V573h-1ZM950 568h2V575h-2ZM958 564h2V568h-2Z" fill="#0c2490"/>
<path d="M163 566h1V584h-1ZM176 565h1V584h-1ZM190 565h1V583h-1ZM194 565h1V585h-1ZM223 564h1V582h-1ZM231 567h1V582h-1ZM266 570h1V582h-1ZM279 567h1V585h-1ZM293 567h1V585h-1ZM316 568h2V584h-2ZM326 569h1V583h-1ZM353 565h1V582h-1ZM363 566h1V584h-1ZM377 566h1V583h-1ZM393 565h1V583h-1ZM457 565h1V582h-1ZM466 570h3V582h-3ZM520 569h1V584h-1ZM533 568h1V582h-1ZM542 570h1V582h-1ZM586 567h2V582h-2ZM591 567h1V582h-1ZM608 564h1V585h-1ZM670 565h1V585h-1ZM695 570h1V584h-1ZM731 570h1V582h-1ZM734 567h1V583h-1ZM763 566h1V582h-1ZM783 567h2V582h-2ZM789 567h2V585h-2ZM836 566h1V584h-1ZM893 568h1V584h-1ZM950 568h2V585h-2ZM958 564h2V582h-2ZM963 567h1V583h-1ZM966 569h3V584h-3ZM1001 565h2V585h-2ZM1079 565h1V585h-1Z" fill="#1848fc"/>
<path d="M244 569h2V583h-2ZM309 565h1V583h-1ZM366 569h1V583h-1ZM497 564h1V583h-1ZM677 568h1V584h-1ZM774 566h1V582h-1ZM777 568h1V582h-1ZM800 569h1V582h-1ZM832 567h2V584h-2Z" fill="#183cfc"/>
<path d="M561 565h1V570h-1ZM708 564h2V567h-2ZM992 567h1V571h-1Z" fill="#0c2478"/>
<path d="M904 565h1V584h-1ZM971 566h2V584h-2Z" fill="#0c3ccc"/>
<path d="M96 584h1V606h-1ZM98 584h1V606h-1ZM152 584h1V606h-1ZM163 584h1V606h-1ZM232 584h1V606h-1ZM334 584h1V606h-1ZM372 584h1V606h-1ZM546 584h1V606h-1ZM554 584h1V606h-1ZM572 584h1V606h-1ZM621 584h1V606h-1ZM757 584h1V606h-1ZM860 584h1V606h-1ZM1041 584h1V606h-1Z" fill="#0c78d8"/>
<path d="M104 584h1V606h-1ZM113 584h1V606h-1ZM190 584h3V606h-3ZM343 584h1V606h-1ZM683 584h1V606h-1ZM703 584h2V606h-2ZM724 584h1V606h-1ZM761 584h3V606h-3ZM768 584h2V606h-2ZM805 584h1V606h-1ZM855 584h1V606h-1ZM865 584h1V606h-1ZM879 584h3V606h-3ZM998 584h2V606h-2Z" fill="#0c78cc"/>
<path d="M117 584h1V606h-1ZM172 584h1V606h-1ZM217 584h1V606h-1ZM245 584h1V606h-1ZM268 584h1V606h-1ZM301 584h1V606h-1ZM348 584h1V606h-1ZM493 584h3V606h-3ZM584 584h3V606h-3ZM626 584h2V606h-2ZM649 584h1V606h-1ZM707 584h1V606h-1ZM709 584h2V606h-2ZM799 584h2V606h-2ZM893 584h1V606h-1ZM937 584h1V606h-1ZM987 584h1V606h-1ZM1020 584h1V606h-1ZM1051 584h2V606h-2Z" fill="#0c6cc0"/>
<path d="M166 584h1V606h-1ZM435 584h1V606h-1ZM536 584h1V606h-1Z" fill="#0c6cb4"/>
<path d="M201 584h2V606h-2ZM229 584h1V606h-1ZM287 584h3V606h-3ZM331 584h1V606h-1ZM377 584h2V606h-2ZM406 584h1V606h-1ZM561 584h1V606h-1ZM651 584h2V606h-2ZM670 584h1V606h-1ZM677 584h2V606h-2ZM917 584h2V606h-2ZM969 584h1V606h-1ZM1036 584h1V606h-1ZM1064 584h1V606h-1Z" fill="#0c84e4"/>
<path d="M374 584h1V606h-1ZM439 584h1V606h-1ZM470 584h2V606h-2ZM697 584h2V606h-2ZM740 584h2V606h-2Z" fill="#0c84f0"/>
<path d="M479 584h1V606h-1Z" fill="#0c90f0"/>
<path d="M605 584h2V606h-2ZM673 584h1V606h-1ZM775 584h1V606h-1ZM870 584h2V606h-2Z" fill="#0c84d8"/>
<path d="M96 605h1V619h-1ZM331 605h2V619h-2ZM663 605h1V619h-1ZM826 605h1V619h-1ZM879 605h2V619h-2ZM1024 605h1V619h-1Z" fill="#0c90a8"/>
<path d="M127 605h3V619h-3ZM163 605h2V619h-2ZM191 605h2V619h-2ZM223 605h1V619h-1ZM392 605h1V619h-1ZM536 605h1V619h-1ZM579 605h1V619h-1ZM692 605h1V619h-1ZM764 605h1V619h-1ZM855 605h1V619h-1ZM905 605h1V619h-1Z" fill="#0c849c"/>
<path d="M136 605h2V619h-2ZM296 605h1V619h-1ZM370 605h1V619h-1ZM389 605h1V619h-1ZM406 605h1V619h-1ZM442 605h3V619h-3ZM481 605h1V619h-1ZM623 605h1V619h-1ZM642 605h1V619h-1ZM647 605h1V619h-1ZM874 605h1V619h-1ZM972 605h2V619h-2ZM995 605h1V619h-1ZM1008 605h1V619h-1ZM1038 605h1V619h-1Z" fill="#0c9cc0"/>
<path d="M152 605h1V619h-1ZM169 605h1V619h-1ZM301 605h1V619h-1ZM377 605h1V619h-1ZM416 605h1V619h-1ZM430 605h3V619h-3ZM494 605h1V619h-1ZM749 605h2V619h-2ZM786 605h1V619h-1ZM846 605h1V619h-1ZM865 605h1V619h-1ZM966 605h1V619h-1ZM1045 605h1V619h-1Z" fill="#0c84a8"/>
<path d="M174 605h1V619h-1ZM177 605h1V619h-1ZM226 605h1V619h-1ZM238 605h1V619h-1ZM263 605h1V619h-1ZM336 605h3V619h-3ZM505 605h1V619h-1ZM518 605h1V619h-1ZM758 605h1V619h-1ZM900 605h2V619h-2ZM955 605h2V619h-2Z" fill="#0c90b4"/>
<path d="M208 605h3V619h-3ZM354 605h2V619h-2Z" fill="#0c9cb4"/>
<path d="M318 605h2V619h-2ZM348 605h1V619h-1ZM478 605h1V619h-1ZM602 605h2V619h-2ZM716 605h2V619h-2ZM893 605h2V619h-2ZM987 605h1V619h-1Z" fill="#0ca8cc"/>
<path d="M770 605h2V619h-2ZM860 605h1V619h-1Z" fill="#0c789c"/>
<path d="M98 630h3V648h-3ZM108 630h3V648h-3ZM226 630h2V648h-2ZM285 630h3V648h-3ZM356 630h2V648h-2ZM458 630h1V648h-1ZM462 630h1V648h-1ZM494 630h2V648h-2ZM521 630h2V648h-2ZM561 630h3V648h-3ZM602 630h1V648h-1ZM897 630h3V648h-3ZM936 630h1V648h-1ZM974 630h2V648h-2ZM992 630h1V648h-1ZM1001 630h3V648h-3ZM1017 630h3V648h-3Z" fill="#18b46c"/>
<path d="M98 647h3V665h-3ZM108 647h3V665h-3ZM155 647h2V665h-2ZM226 647h2V665h-2ZM285 647h3V665h-3ZM290 647h3V665h-3ZM309 647h1V665h-1ZM356 647h2V665h-2ZM396 647h1V665h-1ZM453 647h1V665h-1ZM458 647h1V665h-1ZM462 647h1V665h-1ZM494 647h2V665h-2ZM521 647h2V665h-2ZM532 647h1V665h-1ZM581 647h2V665h-2ZM602 647h1V665h-1ZM624 647h1V665h-1ZM637 647h2V665h-2ZM642 647h1V665h-1ZM765 647h2V665h-2ZM769 647h1V665h-1ZM793 647h3V665h-3ZM857 647h1V665h-1ZM936 647h1V665h-1ZM947 647h1V665h-1ZM974 647h2V665h-2ZM1057 647h1V665h-1Z" fill="#30c048"/>
<path d="M98 664h3V677h-3ZM320 664h1V677h-1ZM391 664h3V677h-3ZM494 664h2V677h-2ZM769 664h1V677h-1ZM912 664h2V677h-2ZM947 664h1V677h-1ZM974 664h2V677h-2ZM1063 664h1V677h-1Z" fill="#84cc18"/>
<path d="M98 676h3V686h-3ZM108 676h3V686h-3ZM138 676h1V686h-1ZM184 676h2V686h-2ZM226 676h2V686h-2ZM272 676h3V686h-3ZM285 676h3V686h-3ZM309 676h1V686h-1ZM318 676h1V686h-1ZM320 676h1V686h-1ZM356 676h2V686h-2ZM391 676h3V686h-3ZM416 676h1V686h-1ZM453 676h1V686h-1ZM458 676h1V686h-1ZM462 676h1V686h-1ZM475 676h1V686h-1ZM494 676h2V686h-2ZM521 676h2V686h-2ZM528 676h2V686h-2ZM532 676h1V686h-1ZM581 676h2V686h-2ZM587 676h2V686h-2ZM602 676h1V686h-1ZM624 676h1V686h-1ZM642 676h1V686h-1ZM765 676h2V686h-2ZM769 676h1V686h-1ZM793 676h3V686h-3ZM828 676h2V686h-2ZM857 676h1V686h-1ZM882 676h2V686h-2ZM912 676h2V686h-2ZM936 676h1V686h-1ZM947 676h1V686h-1ZM974 676h2V686h-2ZM1057 676h1V686h-1ZM1059 676h1V686h-1ZM1063 676h1V686h-1Z" fill="#d8d800"/>
<path d="M98 686h3V691h-3ZM391 686h3V691h-3ZM947 686h1V691h-1Z" fill="#d8b400"/>
<path d="M102 618h3V631h-3ZM108 618h3V631h-3ZM123 618h2V631h-2ZM237 618h3V631h-3ZM383 618h3V631h-3ZM438 618h1V631h-1ZM637 618h2V631h-2ZM839 618h1V631h-1Z" fill="#0c9c84"/>
<path d="M102 630h3V648h-3ZM237 630h3V648h-3ZM314 630h2V648h-2ZM438 630h1V648h-1ZM468 630h2V648h-2ZM731 630h2V648h-2ZM790 630h2V648h-2ZM839 630h1V648h-1ZM874 630h2V648h-2ZM889 630h3V648h-3Z" fill="#18a860"/>
<path d="M102 647h3V665h-3ZM123 647h2V665h-2ZM142 647h2V665h-2ZM229 647h1V665h-1ZM237 647h3V665h-3ZM249 647h1V665h-1ZM263 647h2V665h-2ZM314 647h2V665h-2ZM343 647h1V665h-1ZM352 647h1V665h-1ZM372 647h1V665h-1ZM374 647h2V665h-2ZM383 647h3V665h-3ZM388 647h2V665h-2ZM438 647h1V665h-1ZM468 647h2V665h-2ZM502 647h1V665h-1ZM660 647h2V665h-2ZM670 647h2V665h-2ZM681 647h2V665h-2ZM685 647h2V665h-2ZM713 647h2V665h-2ZM716 647h3V665h-3ZM731 647h2V665h-2ZM753 647h2V665h-2ZM790 647h2V665h-2ZM798 647h3V665h-3ZM831 647h2V665h-2ZM839 647h1V665h-1ZM841 647h3V665h-3ZM874 647h2V665h-2ZM889 647h3V665h-3ZM901 647h3V665h-3ZM908 647h1V665h-1Z" fill="#30b448"/>
<path d="M102 664h3V677h-3ZM142 664h2V677h-2ZM237 664h3V677h-3ZM249 664h1V677h-1ZM263 664h2V677h-2ZM314 664h2V677h-2ZM330 664h1V677h-1ZM334 664h2V677h-2ZM372 664h1V677h-1ZM388 664h2V677h-2ZM430 664h1V677h-1ZM438 664h1V677h-1ZM465 664h2V677h-2ZM468 664h2V677h-2ZM497 664h2V677h-2ZM607 664h2V677h-2ZM631 664h1V677h-1ZM657 664h2V677h-2ZM660 664h2V677h-2ZM670 664h2V677h-2ZM685 664h2V677h-2ZM713 664h2V677h-2ZM731 664h2V677h-2ZM790 664h2V677h-2ZM798 664h3V677h-3ZM839 664h1V677h-1ZM861 664h1V677h-1ZM874 664h2V677h-2ZM889 664h3V677h-3ZM908 664h1V677h-1ZM955 664h1V677h-1ZM1072 664h2V677h-2Z" fill="#78c018"/>
<path d="M102 676h3V686h-3ZM123 676h2V686h-2ZM229 676h1V686h-1ZM237 676h3V686h-3ZM249 676h1V686h-1ZM314 676h2V686h-2ZM343 676h1V686h-1ZM352 676h1V686h-1ZM359 676h1V686h-1ZM363 676h1V686h-1ZM374 676h2V686h-2ZM383 676h3V686h-3ZM388 676h2V686h-2ZM396 676h1V686h-1ZM438 676h1V686h-1ZM468 676h2V686h-2ZM502 676h1V686h-1ZM681 676h2V686h-2ZM713 676h2V686h-2ZM716 676h3V686h-3ZM751 676h1V686h-1ZM753 676h2V686h-2ZM790 676h2V686h-2ZM798 676h3V686h-3ZM831 676h2V686h-2ZM839 676h1V686h-1ZM841 676h3V686h-3ZM874 676h2V686h-2ZM886 676h2V686h-2ZM889 676h3V686h-3ZM901 676h3V686h-3ZM908 676h1V686h-1ZM940 676h1V686h-1ZM1039 676h2V686h-2ZM1077 676h2V686h-2Z" fill="#cccc00"/>
<path d="M102 686h3V691h-3ZM237 686h3V691h-3ZM249 686h1V691h-1ZM314 686h2V691h-2ZM372 686h1V691h-1ZM388 686h2V691h-2ZM438 686h1V691h-1ZM468 686h2V691h-2ZM685 686h2V691h-2ZM790 686h2V691h-2ZM839 686h1V691h-1ZM874 686h2V691h-2ZM886 686h2V691h-2ZM889 686h3V691h-3Z" fill="#cca800"/>
<path d="M108 664h3V677h-3ZM123 664h2V677h-2ZM155 664h2V677h-2ZM229 664h1V677h-1ZM290 664h3V677h-3ZM343 664h1V677h-1ZM352 664h1V677h-1ZM374 664h2V677h-2ZM383 664h3V677h-3ZM396 664h1V677h-1ZM502 664h1V677h-1ZM602 664h1V677h-1ZM637 664h2V677h-2ZM681 664h2V677h-2ZM716 664h3V677h-3ZM753 664h2V677h-2ZM810 664h2V677h-2ZM831 664h2V677h-2ZM841 664h3V677h-3ZM901 664h3V677h-3Z" fill="#78cc18"/>
<path d="M108 686h3V691h-3ZM123 686h2V691h-2ZM155 686h2V691h-2ZM229 686h1V691h-1ZM290 686h3V691h-3ZM320 686h1V691h-1ZM343 686h1V691h-1ZM352 686h1V691h-1ZM359 686h1V691h-1ZM363 686h1V691h-1ZM374 686h2V691h-2ZM383 686h3V691h-3ZM396 686h1V691h-1ZM494 686h2V691h-2ZM502 686h1V691h-1ZM602 686h1V691h-1ZM637 686h2V691h-2ZM681 686h2V691h-2ZM713 686h2V691h-2ZM716 686h3V691h-3ZM751 686h1V691h-1ZM753 686h2V691h-2ZM798 686h3V691h-3ZM810 686h2V691h-2ZM831 686h2V691h-2ZM841 686h3V691h-3ZM882 686h2V691h-2ZM901 686h3V691h-3ZM908 686h1V691h-1ZM912 686h2V691h-2ZM940 686h1V691h-1ZM1039 686h2V691h-2ZM1077 686h2V691h-2Z" fill="#d8a800"/>
<path d="M113 676h2V686h-2ZM117 676h3V686h-3ZM180 676h1V686h-1ZM311 676h2V686h-2ZM349 676h2V686h-2ZM610 676h2V686h-2ZM649 676h2V686h-2ZM654 676h2V686h-2ZM783 676h1V686h-1ZM906 676h1V686h-1ZM917 676h1V686h-1Z" fill="#f0e400"/>
<path d="M113 686h2V691h-2ZM117 686h3V691h-3ZM180 686h1V691h-1ZM192 686h1V691h-1ZM221 686h3V691h-3ZM259 686h2V691h-2ZM311 686h2V691h-2ZM325 686h3V691h-3ZM346 686h2V691h-2ZM349 686h2V691h-2ZM435 686h2V691h-2ZM567 686h2V691h-2ZM610 686h2V691h-2ZM649 686h2V691h-2ZM654 686h2V691h-2ZM665 686h2V691h-2ZM740 686h2V691h-2ZM762 686h1V691h-1ZM783 686h1V691h-1ZM787 686h2V691h-2ZM822 686h2V691h-2ZM906 686h1V691h-1ZM917 686h1V691h-1ZM986 686h1V691h-1ZM1045 686h2V691h-2Z" fill="#f0c000"/>
<path d="M117 630h3V648h-3ZM180 630h1V648h-1ZM325 630h3V648h-3ZM346 630h2V648h-2ZM420 630h3V648h-3ZM480 630h2V648h-2ZM567 630h2V648h-2ZM610 630h2V648h-2ZM688 630h2V648h-2ZM702 630h2V648h-2ZM740 630h2V648h-2ZM783 630h1V648h-1ZM116 630h1V648h-1ZM126 630h1V648h-1ZM151 630h1V648h-1ZM163 630h1V648h-1ZM184 630h1V648h-1ZM192 630h1V648h-1ZM215 630h1V648h-1ZM232 630h1V648h-1ZM261 630h1V648h-1ZM278 630h1V648h-1ZM293 630h1V648h-1ZM350 630h1V648h-1ZM360 630h1V648h-1ZM426 630h1V648h-1ZM478 630h1V648h-1ZM504 630h1V648h-1ZM517 630h1V648h-1ZM528 630h1V648h-1ZM530 630h1V648h-1ZM643 630h1V648h-1ZM745 630h1V648h-1ZM749 630h1V648h-1ZM762 630h1V648h-1ZM768 630h1V648h-1ZM770 630h1V648h-1ZM790 630h1V648h-1ZM818 630h1V648h-1ZM839 630h1V648h-1ZM857 630h1V648h-1ZM916 630h1V648h-1ZM940 630h1V648h-1ZM993 630h1V648h-1ZM996 630h1V648h-1ZM1012 630h1V648h-1ZM1042 630h1V648h-1ZM1056 630h1V648h-1Z" fill="#18c078"/>
<path d="M117 647h3V665h-3ZM180 647h1V665h-1ZM192 647h1V665h-1ZM311 647h2V665h-2ZM325 647h3V665h-3ZM346 647h2V665h-2ZM349 647h2V665h-2ZM420 647h3V665h-3ZM435 647h2V665h-2ZM480 647h2V665h-2ZM483 647h2V665h-2ZM557 647h1V665h-1ZM567 647h2V665h-2ZM610 647h2V665h-2ZM649 647h2V665h-2ZM654 647h2V665h-2ZM688 647h2V665h-2ZM702 647h2V665h-2ZM740 647h2V665h-2ZM744 647h2V665h-2ZM762 647h1V665h-1ZM783 647h1V665h-1ZM822 647h2V665h-2ZM917 647h1V665h-1Z" fill="#3ccc54"/>
<path d="M117 664h3V677h-3ZM180 664h1V677h-1ZM311 664h2V677h-2ZM349 664h2V677h-2ZM610 664h2V677h-2ZM649 664h2V677h-2ZM654 664h2V677h-2ZM783 664h1V677h-1ZM906 664h1V677h-1ZM917 664h1V677h-1ZM1045 664h2V677h-2Z" fill="#90e424"/>
<path d="M123 630h2V648h-2ZM155 630h2V648h-2ZM229 630h1V648h-1ZM352 630h1V648h-1ZM374 630h2V648h-2ZM383 630h3V648h-3ZM396 630h1V648h-1ZM637 630h2V648h-2ZM681 630h2V648h-2ZM713 630h2V648h-2ZM716 630h3V648h-3Z" fill="#18a86c"/>
<path d="M138 686h1V691h-1ZM184 686h2V691h-2ZM226 686h2V691h-2ZM272 686h3V691h-3ZM285 686h3V691h-3ZM309 686h1V691h-1ZM318 686h1V691h-1ZM356 686h2V691h-2ZM416 686h1V691h-1ZM453 686h1V691h-1ZM458 686h1V691h-1ZM462 686h1V691h-1ZM475 686h1V691h-1ZM521 686h2V691h-2ZM528 686h2V691h-2ZM532 686h1V691h-1ZM561 686h3V691h-3ZM581 686h2V691h-2ZM587 686h2V691h-2ZM624 686h1V691h-1ZM642 686h1V691h-1ZM747 686h3V691h-3ZM765 686h2V691h-2ZM769 686h1V691h-1ZM775 686h2V691h-2ZM793 686h3V691h-3ZM808 686h1V691h-1ZM828 686h2V691h-2ZM857 686h1V691h-1ZM897 686h3V691h-3ZM936 686h1V691h-1ZM974 686h2V691h-2ZM992 686h1V691h-1ZM1001 686h3V691h-3ZM1017 686h3V691h-3ZM1057 686h1V691h-1ZM1059 686h1V691h-1ZM1063 686h1V691h-1Z" fill="#e4b400"/>
<path d="M142 676h2V686h-2ZM372 676h1V686h-1ZM631 676h1V686h-1ZM660 676h2V686h-2ZM685 676h2V686h-2Z" fill="#ccc000"/>
<path d="M142 686h2V691h-2ZM194 686h1V691h-1ZM263 686h2V691h-2ZM281 686h3V691h-3ZM295 686h2V691h-2ZM301 686h2V691h-2ZM330 686h1V691h-1ZM334 686h2V691h-2ZM430 686h1V691h-1ZM465 686h2V691h-2ZM497 686h2V691h-2ZM513 686h2V691h-2ZM607 686h2V691h-2ZM631 686h1V691h-1ZM657 686h2V691h-2ZM660 686h2V691h-2ZM670 686h2V691h-2ZM731 686h2V691h-2ZM861 686h1V691h-1ZM955 686h1V691h-1ZM1072 686h2V691h-2Z" fill="#cc9c00"/>
<path d="M155 676h2V686h-2ZM290 676h3V686h-3ZM637 676h2V686h-2ZM810 676h2V686h-2Z" fill="#d8cc00"/>
<path d="M180 618h1V631h-1ZM610 618h2V631h-2ZM740 618h2V631h-2Z" fill="#0cb490"/>
<path d="M192 664h1V677h-1ZM325 664h3V677h-3ZM346 664h2V677h-2ZM435 664h2V677h-2ZM567 664h2V677h-2ZM740 664h2V677h-2ZM762 664h1V677h-1ZM787 664h2V677h-2ZM822 664h2V677h-2Z" fill="#84e418"/>
<path d="M192 676h1V686h-1ZM218 676h1V686h-1ZM325 676h3V686h-3ZM346 676h2V686h-2ZM420 676h3V686h-3ZM435 676h2V686h-2ZM480 676h2V686h-2ZM483 676h2V686h-2ZM557 676h1V686h-1ZM561 676h3V686h-3ZM567 676h2V686h-2ZM665 676h2V686h-2ZM688 676h2V686h-2ZM702 676h2V686h-2ZM740 676h2V686h-2ZM744 676h2V686h-2ZM762 676h1V686h-1ZM787 676h2V686h-2ZM822 676h2V686h-2ZM992 676h1V686h-1ZM1001 676h3V686h-3ZM1017 676h3V686h-3ZM106 676h2V686h-2ZM115 676h1V686h-1ZM127 676h1V686h-1ZM137 676h2V686h-2ZM152 676h1V686h-1ZM154 676h2V686h-2ZM158 676h2V686h-2ZM184 676h2V686h-2ZM192 676h1V686h-1ZM210 676h1V686h-1ZM214 676h2V686h-2ZM225 676h1V686h-1ZM230 676h1V686h-1ZM238 676h2V686h-2ZM250 676h2V686h-2ZM255 676h1V686h-1ZM267 676h1V686h-1ZM271 676h1V686h-1ZM298 676h2V686h-2ZM303 676h2V686h-2ZM306 676h2V686h-2ZM313 676h2V686h-2ZM341 676h2V686h-2ZM350 676h2V686h-2ZM362 676h2V686h-2ZM369 676h2V686h-2ZM377 676h2V686h-2ZM401 676h1V686h-1ZM404 676h1V686h-1ZM418 676h1V686h-1ZM427 676h1V686h-1ZM455 676h2V686h-2ZM474 676h2V686h-2ZM477 676h1V686h-1ZM481 676h1V686h-1ZM535 676h1V686h-1ZM538 676h1V686h-1ZM545 676h1V686h-1ZM557 676h1V686h-1ZM561 676h1V686h-1ZM572 676h1V686h-1ZM577 676h1V686h-1ZM587 676h2V686h-2ZM601 676h1V686h-1ZM603 676h2V686h-2ZM617 676h2V686h-2ZM675 676h2V686h-2ZM690 676h1V686h-1ZM709 676h1V686h-1ZM711 676h2V686h-2ZM715 676h1V686h-1ZM717 676h1V686h-1ZM732 676h1V686h-1ZM738 676h1V686h-1ZM753 676h2V686h-2ZM759 676h1V686h-1ZM777 676h1V686h-1ZM782 676h1V686h-1ZM787 676h1V686h-1ZM798 676h2V686h-2ZM814 676h2V686h-2ZM823 676h2V686h-2ZM834 676h2V686h-2ZM840 676h1V686h-1ZM850 676h2V686h-2ZM859 676h2V686h-2ZM863 676h1V686h-1ZM883 676h2V686h-2ZM899 676h1V686h-1ZM907 676h2V686h-2ZM926 676h2V686h-2ZM930 676h2V686h-2ZM933 676h2V686h-2ZM936 676h1V686h-1ZM964 676h2V686h-2ZM975 676h1V686h-1ZM985 676h1V686h-1ZM993 676h1V686h-1ZM1002 676h2V686h-2ZM1020 676h1V686h-1ZM1023 676h1V686h-1ZM1044 676h1V686h-1ZM1049 676h2V686h-2ZM1061 676h2V686h-2ZM1068 676h1V686h-1Z" fill="#e4e400"/>
<path d="M194 676h1V686h-1ZM263 676h2V686h-2ZM281 676h3V686h-3ZM295 676h2V686h-2ZM301 676h2V686h-2ZM330 676h1V686h-1ZM334 676h2V686h-2ZM430 676h1V686h-1ZM465 676h2V686h-2ZM497 676h2V686h-2ZM513 676h2V686h-2ZM607 676h2V686h-2ZM657 676h2V686h-2ZM670 676h2V686h-2ZM731 676h2V686h-2ZM861 676h1V686h-1ZM955 676h1V686h-1ZM1072 676h2V686h-2Z" fill="#c0c000"/>
<path d="M218 686h1V691h-1ZM420 686h3V691h-3ZM480 686h2V691h-2ZM483 686h2V691h-2ZM557 686h1V691h-1ZM688 686h2V691h-2ZM702 686h2V691h-2ZM744 686h2V691h-2ZM106 686h2V691h-2ZM115 686h1V691h-1ZM127 686h1V691h-1ZM137 686h2V691h-2ZM152 686h1V691h-1ZM154 686h2V691h-2ZM158 686h2V691h-2ZM184 686h2V691h-2ZM192 686h1V691h-1ZM210 686h1V691h-1ZM214 686h2V691h-2ZM225 686h1V691h-1ZM230 686h1V691h-1ZM238 686h2V691h-2ZM250 686h2V691h-2ZM255 686h1V691h-1ZM267 686h1V691h-1ZM271 686h1V691h-1ZM298 686h2V691h-2ZM303 686h2V691h-2ZM306 686h2V691h-2ZM313 686h2V691h-2ZM341 686h2V691h-2ZM350 686h2V691h-2ZM362 686h2V691h-2ZM369 686h2V691h-2ZM377 686h2V691h-2ZM401 686h1V691h-1ZM404 686h1V691h-1ZM418 686h1V691h-1ZM427 686h1V691h-1ZM455 686h2V691h-2ZM474 686h2V691h-2ZM477 686h1V691h-1ZM481 686h1V691h-1ZM535 686h1V691h-1ZM538 686h1V691h-1ZM545 686h1V691h-1ZM557 686h1V691h-1ZM561 686h1V691h-1ZM572 686h1V691h-1ZM577 686h1V691h-1ZM587 686h2V691h-2ZM601 686h1V691h-1ZM603 686h2V691h-2ZM617 686h2V691h-2ZM675 686h2V691h-2ZM690 686h1V691h-1ZM709 686h1V691h-1ZM711 686h2V691h-2ZM715 686h1V691h-1ZM717 686h1V691h-1ZM732 686h1V691h-1ZM738 686h1V691h-1ZM753 686h2V691h-2ZM759 686h1V691h-1ZM777 686h1V691h-1ZM782 686h1V691h-1ZM787 686h1V691h-1ZM798 686h2V691h-2ZM814 686h2V691h-2ZM823 686h2V691h-2ZM834 686h2V691h-2ZM840 686h1V691h-1ZM850 686h2V691h-2ZM859 686h2V691h-2ZM863 686h1V691h-1ZM883 686h2V691h-2ZM899 686h1V691h-1ZM907 686h2V691h-2ZM926 686h2V691h-2ZM930 686h2V691h-2ZM933 686h2V691h-2ZM936 686h1V691h-1ZM964 686h2V691h-2ZM975 686h1V691h-1ZM985 686h1V691h-1ZM993 686h1V691h-1ZM1002 686h2V691h-2ZM1020 686h1V691h-1ZM1023 686h1V691h-1ZM1044 686h1V691h-1ZM1049 686h2V691h-2ZM1061 686h2V691h-2ZM1068 686h1V691h-1Z" fill="#f0b400"/>
<path d="M221 676h3V686h-3ZM259 676h2V686h-2ZM986 676h1V686h-1ZM1045 676h2V686h-2Z" fill="#f0f000"/>
<path d="M226 664h2V677h-2ZM285 664h3V677h-3ZM309 664h1V677h-1ZM318 664h1V677h-1ZM356 664h2V677h-2ZM416 664h1V677h-1ZM420 664h3V677h-3ZM453 664h1V677h-1ZM458 664h1V677h-1ZM462 664h1V677h-1ZM480 664h2V677h-2ZM483 664h2V677h-2ZM521 664h2V677h-2ZM528 664h2V677h-2ZM532 664h1V677h-1ZM557 664h1V677h-1ZM561 664h3V677h-3ZM581 664h2V677h-2ZM587 664h2V677h-2ZM624 664h1V677h-1ZM642 664h1V677h-1ZM688 664h2V677h-2ZM702 664h2V677h-2ZM744 664h2V677h-2ZM747 664h3V677h-3ZM765 664h2V677h-2ZM775 664h2V677h-2ZM793 664h3V677h-3ZM828 664h2V677h-2ZM857 664h1V677h-1ZM897 664h3V677h-3ZM936 664h1V677h-1ZM992 664h1V677h-1ZM1001 664h3V677h-3ZM1017 664h3V677h-3ZM1057 664h1V677h-1ZM1059 664h1V677h-1Z" fill="#84d818"/>
<path d="M285 618h3V631h-3ZM420 618h3V631h-3ZM458 618h1V631h-1ZM462 618h1V631h-1ZM688 618h2V631h-2ZM702 618h2V631h-2ZM992 618h1V631h-1ZM186 618h1V631h-1ZM221 618h1V631h-1ZM250 618h1V631h-1ZM259 618h1V631h-1ZM267 618h1V631h-1ZM362 618h1V631h-1ZM399 618h1V631h-1ZM451 618h1V631h-1ZM513 618h1V631h-1ZM515 618h1V631h-1ZM524 618h1V631h-1ZM526 618h1V631h-1ZM538 618h1V631h-1ZM580 618h1V631h-1ZM582 618h1V631h-1ZM628 618h1V631h-1ZM639 618h1V631h-1ZM705 618h1V631h-1ZM734 618h1V631h-1ZM742 618h1V631h-1ZM793 618h1V631h-1ZM815 618h1V631h-1ZM832 618h1V631h-1ZM863 618h1V631h-1ZM874 618h1V631h-1ZM899 618h1V631h-1ZM909 618h1V631h-1ZM912 618h1V631h-1ZM924 618h1V631h-1ZM953 618h1V631h-1ZM1014 618h1V631h-1ZM1018 618h1V631h-1ZM1066 618h1V631h-1ZM1069 618h1V631h-1ZM1073 618h1V631h-1Z" fill="#0ca890"/>
<path d="M301 664h2V677h-2Z" fill="#6cc018"/>
<path d="M330 647h1V665h-1ZM334 647h2V665h-2ZM430 647h1V665h-1ZM497 647h2V665h-2ZM513 647h2V665h-2ZM657 647h2V665h-2ZM861 647h1V665h-1Z" fill="#30a848"/>
<path d="M497 630h2V648h-2ZM513 630h2V648h-2ZM670 630h2V648h-2ZM861 630h1V648h-1Z" fill="#189c60"/>
<path d="M513 664h2V677h-2Z" fill="#6cb418"/>
<path d="M561 647h3V665h-3ZM897 647h3V665h-3ZM992 647h1V665h-1ZM1001 647h3V665h-3ZM1017 647h3V665h-3Z" fill="#30cc54"/>
<path d="M747 676h3V686h-3ZM775 676h2V686h-2ZM808 676h1V686h-1ZM897 676h3V686h-3Z" fill="#e4d800"/>
<path d="M861 618h1V631h-1Z" fill="#0c9078"/>
<path d="M974 618h2V631h-2Z" fill="#0ca884"/>
<path d="M1045 647h2V665h-2Z" fill="#3cd854"/>
<rect x="215.5" y="802.5" width="151" height="148" fill="none" stroke="#222"/>
<text x="201.00" y="807.40" font-size="13" text-anchor="end" textLength="24.60" lengthAdjust="spacingAndGlyphs" fill="#363636">−40.</text>
<text x="201.00" y="825.77" font-size="13" text-anchor="end" textLength="24.60" lengthAdjust="spacingAndGlyphs" fill="#363636">−30.</text>
<text x="201.00" y="844.15" font-size="13" text-anchor="end" textLength="24.60" lengthAdjust="spacingAndGlyphs" fill="#363636">−20.</text>
<text x="201.00" y="862.52" font-size="13" text-anchor="end" textLength="24.60" lengthAdjust="spacingAndGlyphs" fill="#363636">−10.</text>
<text x="201.00" y="880.90" font-size="13" text-anchor="end" textLength="9.90" lengthAdjust="spacingAndGlyphs" fill="#363636">0.</text>
<text x="201.00" y="899.27" font-size="13" text-anchor="end" textLength="16.30" lengthAdjust="spacingAndGlyphs" fill="#363636">10.</text>
<text x="201.00" y="917.65" font-size="13" text-anchor="end" textLength="16.30" lengthAdjust="spacingAndGlyphs" fill="#363636">20.</text>
<text x="201.00" y="936.02" font-size="13" text-anchor="end" textLength="16.30" lengthAdjust="spacingAndGlyphs" fill="#363636">30.</text>
<text x="201.00" y="954.40" font-size="13" text-anchor="end" textLength="16.30" lengthAdjust="spacingAndGlyphs" fill="#363636">40.</text>
<text x="215.50" y="974.50" font-size="13" text-anchor="middle" textLength="16.30" lengthAdjust="spacingAndGlyphs" fill="#363636">40.</text>
<text x="253.00" y="974.50" font-size="13" text-anchor="middle" textLength="16.30" lengthAdjust="spacingAndGlyphs" fill="#363636">20.</text>
<text x="290.50" y="974.50" font-size="13" text-anchor="middle" textLength="9.90" lengthAdjust="spacingAndGlyphs" fill="#363636">0.</text>
<text x="328.00" y="974.50" font-size="13" text-anchor="middle" textLength="24.60" lengthAdjust="spacingAndGlyphs" fill="#363636">−20.</text>
<text x="365.50" y="974.50" font-size="13" text-anchor="middle" textLength="24.60" lengthAdjust="spacingAndGlyphs" fill="#363636">−40.</text>
<text x="291.00" y="991.20" font-size="13" text-anchor="middle" textLength="37.50" lengthAdjust="spacingAndGlyphs" fill="#363636">KSM-X</text>
<text x="165.00" y="877.00" font-size="13" text-anchor="middle" textLength="37.00" lengthAdjust="spacingAndGlyphs" transform="rotate(-90 165.00 877.00)" fill="#363636">KSM-Y</text>
<rect x="509.5" y="802.5" width="151" height="148" fill="none" stroke="#222"/>
<text x="495.00" y="807.40" font-size="13" text-anchor="end" textLength="16.30" lengthAdjust="spacingAndGlyphs" fill="#363636">40.</text>
<text x="495.00" y="825.77" font-size="13" text-anchor="end" textLength="16.30" lengthAdjust="spacingAndGlyphs" fill="#363636">30.</text>
<text x="495.00" y="844.15" font-size="13" text-anchor="end" textLength="16.30" lengthAdjust="spacingAndGlyphs" fill="#363636">20.</text>
<text x="495.00" y="862.52" font-size="13" text-anchor="end" textLength="16.30" lengthAdjust="spacingAndGlyphs" fill="#363636">10.</text>
<text x="495.00" y="880.90" font-size="13" text-anchor="end" textLength="9.90" lengthAdjust="spacingAndGlyphs" fill="#363636">0.</text>
<text x="495.00" y="899.27" font-size="13" text-anchor="end" textLength="24.60" lengthAdjust="spacingAndGlyphs" fill="#363636">−10.</text>
<text x="495.00" y="917.65" font-size="13" text-anchor="end" textLength="24.60" lengthAdjust="spacingAndGlyphs" fill="#363636">−20.</text>
<text x="495.00" y="936.02" font-size="13" text-anchor="end" textLength="24.60" lengthAdjust="spacingAndGlyphs" fill="#363636">−30.</text>
<text x="495.00" y="954.40" font-size="13" text-anchor="end" textLength="24.60" lengthAdjust="spacingAndGlyphs" fill="#363636">−40.</text>
<text x="509.50" y="974.50" font-size="13" text-anchor="middle" textLength="16.30" lengthAdjust="spacingAndGlyphs" fill="#363636">40.</text>
<text x="547.00" y="974.50" font-size="13" text-anchor="middle" textLength="16.30" lengthAdjust="spacingAndGlyphs" fill="#363636">20.</text>
<text x="584.50" y="974.50" font-size="13" text-anchor="middle" textLength="9.90" lengthAdjust="spacingAndGlyphs" fill="#363636">0.</text>
<text x="622.00" y="974.50" font-size="13" text-anchor="middle" textLength="24.60" lengthAdjust="spacingAndGlyphs" fill="#363636">−20.</text>
<text x="659.50" y="974.50" font-size="13" text-anchor="middle" textLength="24.60" lengthAdjust="spacingAndGlyphs" fill="#363636">−40.</text>
<text x="585.00" y="991.20" font-size="13" text-anchor="middle" textLength="37.50" lengthAdjust="spacingAndGlyphs" fill="#363636">KSM-X</text>
<text x="459.00" y="877.00" font-size="13" text-anchor="middle" textLength="37.00" lengthAdjust="spacingAndGlyphs" transform="rotate(-90 459.00 877.00)" fill="#363636">KSM-Z</text>
<rect x="803.5" y="802.5" width="151" height="148" fill="none" stroke="#222"/>
<text x="789.00" y="807.40" font-size="13" text-anchor="end" textLength="16.30" lengthAdjust="spacingAndGlyphs" fill="#363636">40.</text>
<text x="789.00" y="825.77" font-size="13" text-anchor="end" textLength="16.30" lengthAdjust="spacingAndGlyphs" fill="#363636">30.</text>
<text x="789.00" y="844.15" font-size="13" text-anchor="end" textLength="16.30" lengthAdjust="spacingAndGlyphs" fill="#363636">20.</text>
<text x="789.00" y="862.52" font-size="13" text-anchor="end" textLength="16.30" lengthAdjust="spacingAndGlyphs" fill="#363636">10.</text>
<text x="789.00" y="880.90" font-size="13" text-anchor="end" textLength="9.90" lengthAdjust="spacingAndGlyphs" fill="#363636">0.</text>
<text x="789.00" y="899.27" font-size="13" text-anchor="end" textLength="24.60" lengthAdjust="spacingAndGlyphs" fill="#363636">−10.</text>
<text x="789.00" y="917.65" font-size="13" text-anchor="end" textLength="24.60" lengthAdjust="spacingAndGlyphs" fill="#363636">−20.</text>
<text x="789.00" y="936.02" font-size="13" text-anchor="end" textLength="24.60" lengthAdjust="spacingAndGlyphs" fill="#363636">−30.</text>
<text x="789.00" y="954.40" font-size="13" text-anchor="end" textLength="24.60" lengthAdjust="spacingAndGlyphs" fill="#363636">−40.</text>
<text x="803.50" y="974.50" font-size="13" text-anchor="middle" textLength="24.60" lengthAdjust="spacingAndGlyphs" fill="#363636">−40.</text>
<text x="841.00" y="974.50" font-size="13" text-anchor="middle" textLength="24.60" lengthAdjust="spacingAndGlyphs" fill="#363636">−20.</text>
<text x="878.50" y="974.50" font-size="13" text-anchor="middle" textLength="9.90" lengthAdjust="spacingAndGlyphs" fill="#363636">0.</text>
<text x="916.00" y="974.50" font-size="13" text-anchor="middle" textLength="16.30" lengthAdjust="spacingAndGlyphs" fill="#363636">20.</text>
<text x="953.50" y="974.50" font-size="13" text-anchor="middle" textLength="16.30" lengthAdjust="spacingAndGlyphs" fill="#363636">40.</text>
<text x="879.00" y="991.20" font-size="13" text-anchor="middle" textLength="37.50" lengthAdjust="spacingAndGlyphs" fill="#363636">KSM-Y</text>
<text x="753.00" y="877.00" font-size="13" text-anchor="middle" textLength="37.00" lengthAdjust="spacingAndGlyphs" transform="rotate(-90 753.00 877.00)" fill="#363636">KSM-Z</text>
<path d="M207 803.5H215M211 804.5H215M211 806.5H215M211 808.5H215M211 810.5H215M211 812.5H215M211 814.5H215M211 815.5H215M211 817.5H215M211 819.5H215M207 821.5H215M211 823.5H215M211 825.5H215M211 826.5H215M211 828.5H215M211 830.5H215M211 832.5H215M211 834.5H215M211 836.5H215M211 837.5H215M207 839.5H215M211 841.5H215M211 843.5H215M211 845.5H215M211 847.5H215M211 848.5H215M211 850.5H215M211 852.5H215M211 854.5H215M211 856.5H215M207 858.5H215M211 859.5H215M211 861.5H215M211 863.5H215M211 865.5H215M211 867.5H215M211 869.5H215M211 870.5H215M211 872.5H215M211 874.5H215M207 876.5H215M211 878.5H215M211 880.5H215M211 882.5H215M211 883.5H215M211 885.5H215M211 887.5H215M211 889.5H215M211 891.5H215M211 893.5H215M207 894.5H215M211 896.5H215M211 898.5H215M211 900.5H215M211 902.5H215M211 904.5H215M211 905.5H215M211 907.5H215M211 909.5H215M211 911.5H215M207 913.5H215M211 915.5H215M211 916.5H215M211 918.5H215M211 920.5H215M211 922.5H215M211 924.5H215M211 926.5H215M211 927.5H215M211 929.5H215M207 931.5H215M211 933.5H215M211 935.5H215M211 937.5H215M211 938.5H215M211 940.5H215M211 942.5H215M211 944.5H215M211 946.5H215M211 948.5H215M207 950.5H215M216.5 950V958M234.5 950V955M253.5 950V958M272.5 950V955M291.5 950V958M309.5 950V955M328.5 950V958M347.5 950V955M366.5 950V958M501 803.5H509M505 804.5H509M505 806.5H509M505 808.5H509M505 810.5H509M505 812.5H509M505 814.5H509M505 815.5H509M505 817.5H509M505 819.5H509M501 821.5H509M505 823.5H509M505 825.5H509M505 826.5H509M505 828.5H509M505 830.5H509M505 832.5H509M505 834.5H509M505 836.5H509M505 837.5H509M501 839.5H509M505 841.5H509M505 843.5H509M505 845.5H509M505 847.5H509M505 848.5H509M505 850.5H509M505 852.5H509M505 854.5H509M505 856.5H509M501 858.5H509M505 859.5H509M505 861.5H509M505 863.5H509M505 865.5H509M505 867.5H509M505 869.5H509M505 870.5H509M505 872.5H509M505 874.5H509M501 876.5H509M505 878.5H509M505 880.5H509M505 882.5H509M505 883.5H509M505 885.5H509M505 887.5H509M505 889.5H509M505 891.5H509M505 893.5H509M501 894.5H509M505 896.5H509M505 898.5H509M505 900.5H509M505 902.5H509M505 904.5H509M505 905.5H509M505 907.5H509M505 909.5H509M505 911.5H509M501 913.5H509M505 915.5H509M505 916.5H509M505 918.5H509M505 920.5H509M505 922.5H509M505 924.5H509M505 926.5H509M505 927.5H509M505 929.5H509M501 931.5H509M505 933.5H509M505 935.5H509M505 937.5H509M505 938.5H509M505 940.5H509M505 942.5H509M505 944.5H509M505 946.5H509M505 948.5H509M501 950.5H509M510.5 950V958M528.5 950V955M547.5 950V958M566.5 950V955M585.5 950V958M603.5 950V955M622.5 950V958M641.5 950V955M660.5 950V958M795 803.5H803M799 804.5H803M799 806.5H803M799 808.5H803M799 810.5H803M799 812.5H803M799 814.5H803M799 815.5H803M799 817.5H803M799 819.5H803M795 821.5H803M799 823.5H803M799 825.5H803M799 826.5H803M799 828.5H803M799 830.5H803M799 832.5H803M799 834.5H803M799 836.5H803M799 837.5H803M795 839.5H803M799 841.5H803M799 843.5H803M799 845.5H803M799 847.5H803M799 848.5H803M799 850.5H803M799 852.5H803M799 854.5H803M799 856.5H803M795 858.5H803M799 859.5H803M799 861.5H803M799 863.5H803M799 865.5H803M799 867.5H803M799 869.5H803M799 870.5H803M799 872.5H803M799 874.5H803M795 876.5H803M799 878.5H803M799 880.5H803M799 882.5H803M799 883.5H803M799 885.5H803M799 887.5H803M799 889.5H803M799 891.5H803M799 893.5H803M795 894.5H803M799 896.5H803M799 898.5H803M799 900.5H803M799 902.5H803M799 904.5H803M799 905.5H803M799 907.5H803M799 909.5H803M799 911.5H803M795 913.5H803M799 915.5H803M799 916.5H803M799 918.5H803M799 920.5H803M799 922.5H803M799 924.5H803M799 926.5H803M799 927.5H803M799 929.5H803M795 931.5H803M799 933.5H803M799 935.5H803M799 937.5H803M799 938.5H803M799 940.5H803M799 942.5H803M799 944.5H803M799 946.5H803M799 948.5H803M795 950.5H803M804.5 950V958M822.5 950V955M841.5 950V958M860.5 950V955M879.5 950V958M897.5 950V955M916.5 950V958M935.5 950V955M954.5 950V958" stroke="#222" fill="none"/>
<clipPath id="oc0"><rect x="216" y="803" width="150" height="147"/></clipPath>
<g clip-path="url(#oc0)" shape-rendering="auto"><path d="M251.04 799.33L250.41 800.24L249.78 801.16L249.16 802.08L248.55 803.00L247.95 803.92L247.35 804.84L246.76 805.76L246.18 806.67L245.61 807.59L245.04 808.51L244.48 809.43L243.93 810.35L243.39 811.27L242.85 812.19L242.33 813.11L241.81 814.02L241.29 814.94L240.79 815.86L240.29 816.78L239.80 817.70L239.32 818.62L238.85 819.54L238.38 820.46L237.92 821.38L237.47 822.29L237.02 823.21L236.59 824.13L236.16 825.05L235.74 825.97L235.32 826.89L234.92 827.81L234.52 828.73L234.13 829.64L233.74 830.56L233.37 831.48L233.00 832.40L232.64 833.32L232.28 834.24L231.94 835.16L231.60 836.08L231.27 836.99L230.95 837.91L230.63 838.83L230.32 839.75L230.03 840.67L229.73 841.59L229.45 842.51L229.17 843.42L228.90 844.34L228.64 845.26L228.38 846.18L228.14 847.10L227.90 848.02L227.67 848.94L227.44 849.86L227.23 850.77L227.02 851.69L226.82 852.61L226.62 853.53L226.44 854.45L226.26 855.37L226.09 856.29L225.92 857.21L225.77 858.12L225.62 859.04L225.48 859.96L225.35 860.88L225.22 861.80L225.10 862.72L224.99 863.64L224.89 864.56L224.80 865.48L224.71 866.39L224.63 867.31L224.56 868.23L224.49 869.15L224.44 870.07L224.39 870.99L224.34 871.91L224.31 872.83L224.28 873.74L224.27 874.66L224.25 875.58L224.25 876.50L224.25 877.42L224.27 878.34L224.28 879.26L224.31 880.17L224.34 881.09L224.39 882.01L224.44 882.93L224.49 883.85L224.56 884.77L224.63 885.69L224.71 886.61L224.80 887.52L224.89 888.44L224.99 889.36L225.10 890.28L225.22 891.20L225.35 892.12L225.48 893.04L225.62 893.96L225.77 894.88L225.92 895.79L226.09 896.71L226.26 897.63L226.44 898.55L226.62 899.47L226.82 900.39L227.02 901.31L227.23 902.23L227.44 903.14L227.67 904.06L227.90 904.98L228.14 905.90L228.38 906.82L228.64 907.74L228.90 908.66L229.17 909.58L229.45 910.49L229.73 911.41L230.03 912.33L230.32 913.25L230.63 914.17L230.95 915.09L231.27 916.01L231.60 916.92L231.94 917.84L232.28 918.76L232.64 919.68L233.00 920.60L233.37 921.52L233.74 922.44L234.13 923.36L234.52 924.27L234.92 925.19L235.32 926.11L235.74 927.03L236.16 927.95L236.59 928.87L237.02 929.79L237.47 930.71L237.92 931.62L238.38 932.54L238.85 933.46L239.32 934.38L239.80 935.30L240.29 936.22L240.79 937.14L241.29 938.06L241.81 938.98L242.33 939.89L242.85 940.81L243.39 941.73L243.93 942.65L244.48 943.57L245.04 944.49L245.61 945.41L246.18 946.33L246.76 947.24L247.35 948.16L247.95 949.08L248.55 950.00L249.16 950.92L249.78 951.84L250.41 952.76L251.04 953.67" fill="none" stroke="#1a1aff" stroke-width="1.05" stroke-dasharray="2.5 1.5"/><path d="M287.10 799.33L286.01 800.24L284.94 801.16L283.87 802.08L282.82 803.00L281.79 803.92L280.77 804.84L279.76 805.76L278.76 806.67L277.78 807.59L276.80 808.51L275.85 809.43L274.90 810.35L273.97 811.27L273.05 812.19L272.15 813.11L271.25 814.02L270.37 814.94L269.51 815.86L268.65 816.78L267.81 817.70L266.99 818.62L266.17 819.54L265.37 820.46L264.58 821.38L263.81 822.29L263.04 823.21L262.29 824.13L261.56 825.05L260.83 825.97L260.12 826.89L259.43 827.81L258.74 828.73L258.07 829.64L257.41 830.56L256.77 831.48L256.14 832.40L255.52 833.32L254.91 834.24L254.32 835.16L253.74 836.08L253.17 836.99L252.62 837.91L252.08 838.83L251.55 839.75L251.04 840.67L250.53 841.59L250.04 842.51L249.57 843.42L249.11 844.34L248.66 845.26L248.22 846.18L247.80 847.10L247.39 848.02L246.99 848.94L246.60 849.86L246.23 850.77L245.87 851.69L245.53 852.61L245.20 853.53L244.88 854.45L244.57 855.37L244.28 856.29L244.00 857.21L243.73 858.12L243.48 859.04L243.24 859.96L243.01 860.88L242.79 861.80L242.59 862.72L242.40 863.64L242.23 864.56L242.06 865.48L241.91 866.39L241.78 867.31L241.65 868.23L241.54 869.15L241.44 870.07L241.36 870.99L241.29 871.91L241.23 872.83L241.18 873.74L241.15 874.66L241.13 875.58L241.12 876.50L241.13 877.42L241.15 878.34L241.18 879.26L241.23 880.17L241.29 881.09L241.36 882.01L241.44 882.93L241.54 883.85L241.65 884.77L241.78 885.69L241.91 886.61L242.06 887.52L242.23 888.44L242.40 889.36L242.59 890.28L242.79 891.20L243.01 892.12L243.24 893.04L243.48 893.96L243.73 894.88L244.00 895.79L244.28 896.71L244.57 897.63L244.88 898.55L245.20 899.47L245.53 900.39L245.87 901.31L246.23 902.23L246.60 903.14L246.99 904.06L247.39 904.98L247.80 905.90L248.22 906.82L248.66 907.74L249.11 908.66L249.57 909.58L250.04 910.49L250.53 911.41L251.04 912.33L251.55 913.25L252.08 914.17L252.62 915.09L253.17 916.01L253.74 916.92L254.32 917.84L254.91 918.76L255.52 919.68L256.14 920.60L256.77 921.52L257.41 922.44L258.07 923.36L258.74 924.27L259.43 925.19L260.12 926.11L260.83 927.03L261.56 927.95L262.29 928.87L263.04 929.79L263.81 930.71L264.58 931.62L265.37 932.54L266.17 933.46L266.99 934.38L267.81 935.30L268.65 936.22L269.51 937.14L270.37 938.06L271.25 938.98L272.15 939.89L273.05 940.81L273.97 941.73L274.90 942.65L275.85 943.57L276.80 944.49L277.78 945.41L278.76 946.33L279.76 947.24L280.77 948.16L281.79 949.08L282.82 950.00L283.87 950.92L284.94 951.84L286.01 952.76L287.10 953.67" fill="none" stroke="#8c5a28" stroke-width="1.05" stroke-dasharray="2.5 1.5"/></g>
<clipPath id="oc1"><rect x="510" y="803" width="150" height="147"/></clipPath>
<g clip-path="url(#oc1)" shape-rendering="auto"><path d="M545.04 953.67L544.41 952.76L543.78 951.84L543.16 950.92L542.55 950.00L541.95 949.08L541.35 948.16L540.76 947.24L540.18 946.33L539.61 945.41L539.04 944.49L538.48 943.57L537.93 942.65L537.39 941.73L536.85 940.81L536.33 939.89L535.81 938.98L535.29 938.06L534.79 937.14L534.29 936.22L533.80 935.30L533.32 934.38L532.85 933.46L532.38 932.54L531.92 931.62L531.47 930.71L531.02 929.79L530.59 928.87L530.16 927.95L529.74 927.03L529.32 926.11L528.92 925.19L528.52 924.27L528.13 923.36L527.74 922.44L527.37 921.52L527.00 920.60L526.64 919.68L526.28 918.76L525.94 917.84L525.60 916.92L525.27 916.01L524.95 915.09L524.63 914.17L524.33 913.25L524.03 912.33L523.73 911.41L523.45 910.49L523.17 909.58L522.90 908.66L522.64 907.74L522.38 906.82L522.14 905.90L521.90 904.98L521.67 904.06L521.44 903.14L521.23 902.23L521.02 901.31L520.82 900.39L520.62 899.47L520.44 898.55L520.26 897.63L520.09 896.71L519.92 895.79L519.77 894.88L519.62 893.96L519.48 893.04L519.35 892.12L519.22 891.20L519.10 890.28L518.99 889.36L518.89 888.44L518.80 887.52L518.71 886.61L518.63 885.69L518.56 884.77L518.49 883.85L518.44 882.93L518.39 882.01L518.34 881.09L518.31 880.17L518.28 879.26L518.27 878.34L518.25 877.42L518.25 876.50L518.25 875.58L518.27 874.66L518.28 873.74L518.31 872.83L518.34 871.91L518.39 870.99L518.44 870.07L518.49 869.15L518.56 868.23L518.63 867.31L518.71 866.39L518.80 865.48L518.89 864.56L518.99 863.64L519.10 862.72L519.22 861.80L519.35 860.88L519.48 859.96L519.62 859.04L519.77 858.12L519.92 857.21L520.09 856.29L520.26 855.37L520.44 854.45L520.62 853.53L520.82 852.61L521.02 851.69L521.23 850.77L521.44 849.86L521.67 848.94L521.90 848.02L522.14 847.10L522.38 846.18L522.64 845.26L522.90 844.34L523.17 843.42L523.45 842.51L523.73 841.59L524.03 840.67L524.33 839.75L524.63 838.83L524.95 837.91L525.27 836.99L525.60 836.08L525.94 835.16L526.28 834.24L526.64 833.32L527.00 832.40L527.37 831.48L527.74 830.56L528.13 829.64L528.52 828.73L528.92 827.81L529.32 826.89L529.74 825.97L530.16 825.05L530.59 824.13L531.02 823.21L531.47 822.29L531.92 821.38L532.38 820.46L532.85 819.54L533.32 818.62L533.80 817.70L534.29 816.78L534.79 815.86L535.29 814.94L535.81 814.02L536.33 813.11L536.85 812.19L537.39 811.27L537.93 810.35L538.48 809.43L539.04 808.51L539.61 807.59L540.18 806.67L540.76 805.76L541.35 804.84L541.95 803.92L542.55 803.00L543.16 802.08L543.78 801.16L544.41 800.24L545.04 799.33" fill="none" stroke="#1a1aff" stroke-width="1.05" stroke-dasharray="2.5 1.5"/><path d="M581.10 953.67L580.01 952.76L578.94 951.84L577.87 950.92L576.83 950.00L575.79 949.08L574.77 948.16L573.76 947.24L572.76 946.33L571.78 945.41L570.80 944.49L569.85 943.57L568.90 942.65L567.97 941.73L567.05 940.81L566.15 939.89L565.25 938.98L564.37 938.06L563.51 937.14L562.65 936.22L561.81 935.30L560.99 934.38L560.17 933.46L559.37 932.54L558.58 931.62L557.81 930.71L557.04 929.79L556.29 928.87L555.56 927.95L554.83 927.03L554.12 926.11L553.43 925.19L552.74 924.27L552.07 923.36L551.41 922.44L550.77 921.52L550.14 920.60L549.52 919.68L548.91 918.76L548.32 917.84L547.74 916.92L547.17 916.01L546.62 915.09L546.08 914.17L545.55 913.25L545.04 912.33L544.53 911.41L544.04 910.49L543.57 909.58L543.11 908.66L542.66 907.74L542.22 906.82L541.80 905.90L541.39 904.98L540.99 904.06L540.60 903.14L540.23 902.23L539.87 901.31L539.53 900.39L539.20 899.47L538.88 898.55L538.57 897.63L538.28 896.71L538.00 895.79L537.73 894.88L537.48 893.96L537.24 893.04L537.01 892.12L536.79 891.20L536.59 890.28L536.40 889.36L536.23 888.44L536.06 887.52L535.91 886.61L535.78 885.69L535.65 884.77L535.54 883.85L535.44 882.93L535.36 882.01L535.29 881.09L535.23 880.17L535.18 879.26L535.15 878.34L535.13 877.42L535.12 876.50L535.13 875.58L535.15 874.66L535.18 873.74L535.23 872.83L535.29 871.91L535.36 870.99L535.44 870.07L535.54 869.15L535.65 868.23L535.78 867.31L535.91 866.39L536.06 865.48L536.23 864.56L536.40 863.64L536.59 862.72L536.79 861.80L537.01 860.88L537.24 859.96L537.48 859.04L537.73 858.12L538.00 857.21L538.28 856.29L538.57 855.37L538.88 854.45L539.20 853.53L539.53 852.61L539.87 851.69L540.23 850.77L540.60 849.86L540.99 848.94L541.39 848.02L541.80 847.10L542.22 846.18L542.66 845.26L543.11 844.34L543.57 843.42L544.04 842.51L544.53 841.59L545.04 840.67L545.55 839.75L546.08 838.83L546.62 837.91L547.17 836.99L547.74 836.08L548.32 835.16L548.91 834.24L549.52 833.32L550.14 832.40L550.77 831.48L551.41 830.56L552.07 829.64L552.74 828.73L553.43 827.81L554.12 826.89L554.83 825.97L555.56 825.05L556.29 824.13L557.04 823.21L557.81 822.29L558.58 821.38L559.37 820.46L560.17 819.54L560.99 818.62L561.81 817.70L562.65 816.78L563.51 815.86L564.37 814.94L565.25 814.02L566.15 813.11L567.05 812.19L567.97 811.27L568.90 810.35L569.85 809.43L570.80 808.51L571.78 807.59L572.76 806.67L573.76 805.76L574.77 804.84L575.79 803.92L576.83 803.00L577.87 802.08L578.94 801.16L580.01 800.24L581.10 799.33" fill="none" stroke="#8c5a28" stroke-width="1.05" stroke-dasharray="2.5 1.5"/></g>
<g shape-rendering="auto"><circle cx="879" cy="876.2" r="72.8" fill="none" stroke="#1a1aff" stroke-width="1.05" stroke-dasharray="2.5 1.5"/><circle cx="879" cy="876.3" r="28.8" fill="none" stroke="#8c5a28" stroke-width="1.05" stroke-dasharray="2.5 1.5"/></g>
<g shape-rendering="auto" fill="none" stroke="#000" stroke-width="1.35"><circle cx="291.8" cy="877.5" r="37"/><path d="M276.5 874.3 L270 880 L264.8 886.2 L258.5 893 L253.1 902.4 L250 911.4 L249 916.8 L248.6 924 L248.6 930.3 L251.3 938.4 L257.6 942.5"/><path d="M542.5 886.7 L623.75 867.3" stroke-width="1.6"/><ellipse cx="880.3" cy="876.8" rx="38.5" ry="9.5"/><path d="M878 878.5 C874 880 876 881 880 882 L889.6 884.5 L905.8 885.8 L922 887.4 L938.3 886.8 L946.8 884.5"/></g>
<g shape-rendering="auto" fill="none" stroke-width="1"><circle cx="291.4" cy="876.8" r="2" stroke="#000"/><circle cx="585.4" cy="876.8" r="2" stroke="#555"/><circle cx="879.3" cy="876.8" r="2" stroke="#000"/></g>
<g shape-rendering="auto"><circle cx="271.7" cy="908.7" r="2.6" fill="#ff0000"/><circle cx="565.8" cy="881.7" r="2.6" fill="#ff0000"/><circle cx="911.8" cy="881.4" r="2.6" fill="#ff0000"/><rect x="246" y="918" width="5" height="11.5" rx="2.3" fill="#0000ff"/><rect x="540.5" y="884.5" width="4.5" height="4.5" fill="#0000ff"/><rect x="922" y="884.7" width="12" height="5.3" rx="2.5" fill="#0000ff"/></g>
<path d="M243.70000000000002 916.0L252.9 925.2M243.70000000000002 925.2L252.9 916.0" stroke="#ff2020" stroke-width="1.2" shape-rendering="auto"/>
<path d="M537.9 882.1L547.1 891.3000000000001M537.9 891.3000000000001L547.1 882.1" stroke="#ff2020" stroke-width="1.2" shape-rendering="auto"/>
<path d="M919.1 881.6999999999999L928.3000000000001 890.9M919.1 890.9L928.3000000000001 881.6999999999999" stroke="#ff2020" stroke-width="1.2" shape-rendering="auto"/>
<path d="M136.5 218V220M177.5 218V220M218.5 218V220M259.5 218V220M300.5 218V220M341.5 218V220M382.5 218V220M423.5 218V220M464.5 218V220M505.5 218V220M546.5 218V220M587.5 218V220M628.5 218V220M669.5 218V220M710.5 218V220M751.5 218V220M792.5 218V220M833.5 218V220M874.5 218V220M915.5 218V220M956.5 218V220M997.5 218V220M1038.5 218V220M136.5 414V416M177.5 414V416M218.5 414V416M259.5 414V416M300.5 414V416M341.5 414V416M382.5 414V416M423.5 414V416M464.5 414V416M505.5 414V416M546.5 414V416M587.5 414V416M628.5 414V416M669.5 414V416M710.5 414V416M751.5 414V416M792.5 414V416M833.5 414V416M874.5 414V416M915.5 414V416M956.5 414V416M997.5 414V416M1038.5 414V416M136.5 507V509M177.5 507V509M218.5 507V509M259.5 507V509M300.5 507V509M341.5 507V509M382.5 507V509M423.5 507V509M464.5 507V509M505.5 507V509M546.5 507V509M587.5 507V509M628.5 507V509M669.5 507V509M710.5 507V509M751.5 507V509M792.5 507V509M833.5 507V509M874.5 507V509M915.5 507V509M956.5 507V509M997.5 507V509M1038.5 507V509M136.5 689V691M177.5 689V691M218.5 689V691M259.5 689V691M300.5 689V691M341.5 689V691M382.5 689V691M423.5 689V691M464.5 689V691M505.5 689V691M546.5 689V691M587.5 689V691M628.5 689V691M669.5 689V691M710.5 689V691M751.5 689V691M792.5 689V691M833.5 689V691M874.5 689V691M915.5 689V691M956.5 689V691M997.5 689V691M1038.5 689V691" stroke="#444" fill="none"/>
<rect x="95.5" y="28.5" width="985" height="192" fill="none" stroke="#222"/><rect x="95.5" y="224.5" width="985" height="192" fill="none" stroke="#222"/><rect x="95.5" y="420.5" width="985" height="89" fill="none" stroke="#222"/><rect x="95.5" y="513.5" width="985" height="178" fill="none" stroke="#222"/>
<path d="M91 212.5H95M91 200.5H95M91 190.5H95M91 183.5H95M91 176.5H95M91 171.5H95M91 166.5H95M87 161.5H95M91 132.5H95M91 115.5H95M91 103.5H95M91 93.5H95M91 86.5H95M91 79.5H95M91 74.5H95M91 69.5H95M87 64.5H95M91 35.5H95M91 407.5H95M91 391.5H95M91 378.5H95M91 368.5H95M91 359.5H95M91 352.5H95M91 345.5H95M87 339.5H95M91 334.5H95M91 329.5H95M91 324.5H95M91 320.5H95M91 316.5H95M91 312.5H95M91 309.5H95M91 306.5H95M91 303.5H95M87 300.5H95M91 297.5H95M91 294.5H95M91 292.5H95M91 289.5H95M91 287.5H95M91 285.5H95M91 283.5H95M91 281.5H95M91 279.5H95M87 277.5H95M91 275.5H95M91 273.5H95M91 271.5H95M91 270.5H95M91 268.5H95M91 266.5H95M91 265.5H95M91 263.5H95M91 262.5H95M87 260.5H95M91 259.5H95M91 258.5H95M91 256.5H95M91 255.5H95M91 254.5H95M91 253.5H95M91 251.5H95M91 250.5H95M91 249.5H95M87 248.5H95M91 247.5H95M91 246.5H95M91 245.5H95M91 243.5H95M91 242.5H95M91 241.5H95M91 240.5H95M91 239.5H95M91 238.5H95M87 238.5H95M91 237.5H95M91 236.5H95M91 235.5H95M91 234.5H95M91 233.5H95M91 232.5H95M91 231.5H95M91 230.5H95M91 230.5H95M87 229.5H95M91 228.5H95M91 227.5H95M91 226.5H95M91 226.5H95M91 225.5H95M91 224.5H95M91 509.5H95M91 507.5H95M91 505.5H95M91 504.5H95M91 503.5H95M87 502.5H95M91 495.5H95M91 492.5H95M91 489.5H95M91 487.5H95M91 485.5H95M91 483.5H95M91 482.5H95M91 481.5H95M87 480.5H95M91 473.5H95M91 470.5H95M91 467.5H95M91 465.5H95M91 463.5H95M91 461.5H95M91 460.5H95M91 459.5H95M87 458.5H95M91 451.5H95M91 448.5H95M91 445.5H95M91 443.5H95M91 441.5H95M91 439.5H95M91 438.5H95M91 437.5H95M87 436.5H95M91 429.5H95M91 426.5H95M91 423.5H95M91 421.5H95M91 686.5H95M91 679.5H95M91 674.5H95M91 670.5H95M91 666.5H95M91 663.5H95M91 661.5H95M87 658.5H95M91 642.5H95M91 633.5H95M91 626.5H95M91 621.5H95M91 617.5H95M91 614.5H95M91 611.5H95M91 608.5H95M87 606.5H95M91 590.5H95M91 580.5H95M91 574.5H95M91 569.5H95M91 564.5H95M91 561.5H95M91 558.5H95M91 555.5H95M87 553.5H95M91 537.5H95M91 528.5H95M91 521.5H95M91 516.5H95M1105 30.5H1113M1105 87.5H1113M1105 70.5H1109M1105 60.5H1109M1105 52.5H1109M1105 47.5H1109M1105 42.5H1109M1105 38.5H1109M1105 35.5H1109M1105 32.5H1109M1105 145.5H1113M1105 127.5H1109M1105 117.5H1109M1105 110.5H1109M1105 104.5H1109M1105 100.5H1109M1105 96.5H1109M1105 93.5H1109M1105 90.5H1109M1105 202.5H1113M1105 185.5H1109M1105 175.5H1109M1105 167.5H1109M1105 162.5H1109M1105 157.5H1109M1105 153.5H1109M1105 150.5H1109M1105 147.5H1109M1105 226.5H1113M1105 283.5H1113M1105 266.5H1109M1105 256.5H1109M1105 248.5H1109M1105 243.5H1109M1105 238.5H1109M1105 234.5H1109M1105 231.5H1109M1105 228.5H1109M1105 341.5H1113M1105 323.5H1109M1105 313.5H1109M1105 306.5H1109M1105 300.5H1109M1105 296.5H1109M1105 292.5H1109M1105 289.5H1109M1105 286.5H1109M1105 398.5H1113M1105 381.5H1109M1105 371.5H1109M1105 363.5H1109M1105 358.5H1109M1105 353.5H1109M1105 349.5H1109M1105 346.5H1109M1105 343.5H1109M1105 515.5H1113M1105 534.5H1109M1105 554.5H1113M1105 573.5H1109M1105 593.5H1113M1105 613.5H1109M1105 632.5H1113M1105 652.5H1109M1105 671.5H1113M1105 691.5H1109M136.5 711V715M177.5 711V715M218.5 711V718.5M259.5 711V715M300.5 711V715M341.5 711V718.5M382.5 711V715M423.5 711V715M464.5 711V718.5M505.5 711V715M546.5 711V715M587.5 711V718.5M628.5 711V715M669.5 711V715M710.5 711V718.5M751.5 711V715M792.5 711V715M833.5 711V718.5M874.5 711V715M915.5 711V715M956.5 711V718.5M997.5 711V715M1038.5 711V715M1080.5 711V718.5" stroke="#222" stroke-width="1" fill="none"/>
</svg></body></html>
